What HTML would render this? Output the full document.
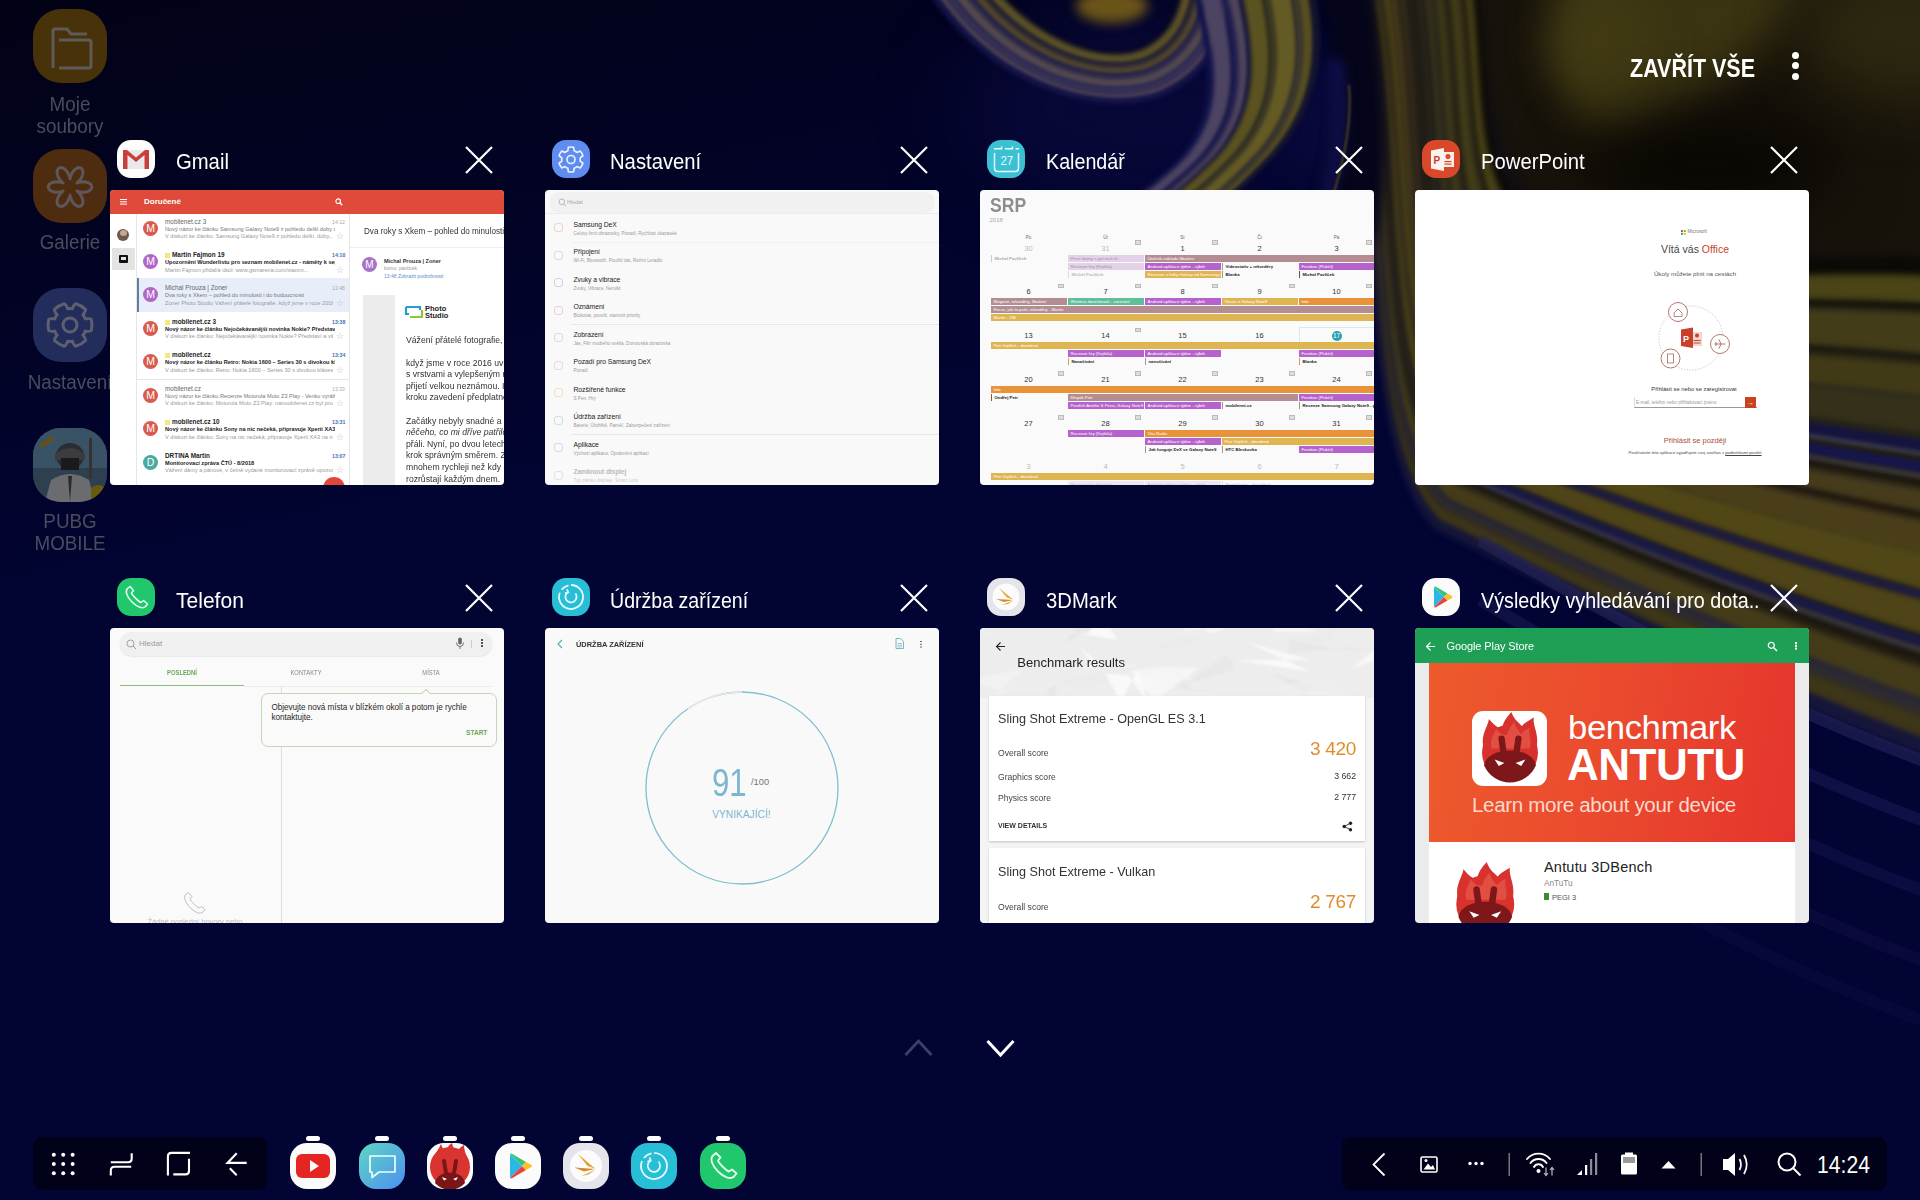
<!DOCTYPE html>
<html><head><meta charset="utf-8">
<style>
*{box-sizing:border-box}
html,body{margin:0;padding:0}
body{width:1920px;height:1200px;overflow:hidden;position:relative;background:#03043a;font-family:"Liberation Sans",sans-serif}
.abs{position:absolute}
#wall{position:absolute;left:0;top:0;width:1920px;height:1200px}
.dtxt{position:absolute;color:#4b4c5c;font-size:20px;line-height:22px;text-align:center;width:110px;left:15px;transform:scaleX(.94)}
.dicon{position:absolute;left:33px;width:74px;height:74px;border-radius:28px}
.card{position:absolute;width:394px;height:295px;border-radius:4px;overflow:hidden;background:#fafafa}
.ttl{position:absolute;color:#fff;font-size:22.5px;line-height:26px;white-space:nowrap;transform-origin:0 50%;transform:scaleX(.9)}
.aic{position:absolute;width:38px;height:38px;border-radius:14px;overflow:hidden}
.x{position:absolute;width:28px;height:28px}
.c{position:absolute;white-space:nowrap}
</style></head>
<body>
<svg id="wall" viewBox="0 0 1920 1200">
<defs>
<linearGradient id="gbase" x1="0" y1="0" x2=".35" y2="1"><stop offset="0" stop-color="#020216"/><stop offset=".45" stop-color="#020432"/><stop offset="1" stop-color="#020434"/></linearGradient>
<filter id="b1" filterUnits="userSpaceOnUse" x="-300" y="-300" width="2520" height="1800" color-interpolation-filters="sRGB"><feGaussianBlur stdDeviation="1"/></filter>
<filter id="b2" filterUnits="userSpaceOnUse" x="-300" y="-300" width="2520" height="1800" color-interpolation-filters="sRGB"><feGaussianBlur stdDeviation="2"/></filter>
<filter id="b3" filterUnits="userSpaceOnUse" x="-300" y="-300" width="2520" height="1800" color-interpolation-filters="sRGB"><feGaussianBlur stdDeviation="3"/></filter>
<filter id="b6" filterUnits="userSpaceOnUse" x="-300" y="-300" width="2520" height="1800" color-interpolation-filters="sRGB"><feGaussianBlur stdDeviation="6"/></filter>
<filter id="b20" filterUnits="userSpaceOnUse" x="-300" y="-300" width="2520" height="1800" color-interpolation-filters="sRGB"><feGaussianBlur stdDeviation="20"/></filter>
<filter id="b30" filterUnits="userSpaceOnUse" x="-300" y="-300" width="2520" height="1800" color-interpolation-filters="sRGB"><feGaussianBlur stdDeviation="30"/></filter>
<filter id="b40" filterUnits="userSpaceOnUse" x="-300" y="-300" width="2520" height="1800" color-interpolation-filters="sRGB"><feGaussianBlur stdDeviation="40"/></filter>
<filter id="b60" filterUnits="userSpaceOnUse" x="-300" y="-300" width="2520" height="1800" color-interpolation-filters="sRGB"><feGaussianBlur stdDeviation="60"/></filter>
</defs>
<rect width="1920" height="1200" fill="url(#gbase)"/>
<path d="M1450 -40 L1980 -40 L1980 300 C1800 270 1640 270 1540 230 C1480 200 1470 100 1450 -40Z" fill="#18130a" filter="url(#b20)"/>
<path d="M1562 -40 L1810 -40 C1790 40 1710 95 1650 130 C1605 152 1572 120 1562 60 Z" fill="#3a3412" filter="url(#b20)"/>
<ellipse cx="1600" cy="40" rx="50" ry="60" fill="#403a14" fill-opacity="1" filter="url(#b20)"/>
<ellipse cx="1910" cy="30" rx="110" ry="70" fill="#2c2810" fill-opacity="1" filter="url(#b30)"/>
<ellipse cx="1710" cy="165" rx="130" ry="55" fill="#0b0804" fill-opacity="1" filter="url(#b30)"/>
<ellipse cx="1150" cy="110" rx="190" ry="90" fill="#0a0a40" fill-opacity="0.7" filter="url(#b40)"/>
<ellipse cx="1330" cy="120" rx="40" ry="70" fill="#0a0a40" fill-opacity="0.8" filter="url(#b20)"/>
<path d="M1475.6 -30.0 C1492.5 99.6 1470.6 199.0 1570.6 238.8 C1680.3 280.7 1830.2 246.2 1980.0 260.1 L1980.0 282.9 C1827.4 267.5 1676.5 295.9 1563.8 253.2 C1463.8 211.4 1486.5 104.4 1468.4 -30.0 Z" fill="#0c0a06" fill-opacity="1" filter="url(#b3)"/>
<path d="M1469.6 -30.0 C1487.5 103.6 1465.0 209.4 1565.0 250.8 C1677.1 293.4 1827.8 264.0 1980.0 279.1 L1980.0 311.5 C1823.8 294.2 1671.7 314.9 1555.4 271.2 C1455.4 227.0 1479.1 110.4 1459.4 -30.0 Z" fill="#4a4416" fill-opacity="1" filter="url(#b3)"/>
<path d="M1460.6 -30.0 C1480.1 109.6 1456.6 225.0 1556.6 268.8 C1672.3 312.3 1824.2 290.6 1980.0 307.7 L1980.0 321.0 C1822.6 303.1 1670.1 321.2 1552.6 277.2 C1452.6 232.2 1476.6 112.4 1456.4 -30.0 Z" fill="#16140a" fill-opacity="1" filter="url(#b3)"/>
<path d="M1457.6 -30.0 C1477.6 111.6 1453.8 230.2 1553.8 274.8 C1670.7 318.7 1823.0 299.5 1980.0 317.2 L1980.0 363.9 C1817.2 343.0 1662.9 349.6 1540.0 304.2 C1440.0 255.6 1465.5 121.4 1442.9 -30.0 Z" fill="#423c18" fill-opacity="1" filter="url(#b3)"/>
<path d="M1444.1 -30.0 C1466.5 120.6 1441.2 253.6 1541.2 301.8 C1663.5 347.1 1817.6 339.5 1980.0 360.1 L1980.0 373.4 C1816.0 351.9 1661.3 355.9 1537.2 310.2 C1437.2 260.8 1463.0 123.4 1439.9 -30.0 Z" fill="#1e1a0e" fill-opacity="1" filter="url(#b3)"/>
<path d="M1441.1 -30.0 C1464.0 122.6 1438.4 258.8 1538.4 307.8 C1661.9 353.4 1816.4 348.3 1980.0 369.6 L1980.0 406.7 C1811.8 383.0 1655.7 378.1 1527.4 331.2 C1427.4 279.0 1454.3 130.4 1429.4 -30.0 Z" fill="#403a16" fill-opacity="1" filter="url(#b3)"/>
<path d="M1430.6 -30.0 C1455.3 129.6 1428.6 277.0 1528.6 328.8 C1656.3 375.5 1812.2 379.4 1980.0 402.9 L1980.0 444.8 C1807.0 418.5 1649.3 403.3 1516.2 355.2 C1416.2 299.8 1444.4 138.4 1417.4 -30.0 Z" fill="#34301a" fill-opacity="1" filter="url(#b3)"/>
<path d="M1418.6 -30.0 C1445.4 137.6 1417.4 297.8 1517.4 352.8 C1649.9 400.8 1807.4 414.9 1980.0 441.0 L1980.0 461.4 C1804.9 434.0 1646.5 414.4 1511.3 365.7 C1411.3 308.9 1440.0 141.9 1412.2 -30.0 Z" fill="#2a2616" fill-opacity="1" filter="url(#b3)"/>
<path d="M1413.3 -30.0 C1441.0 141.1 1412.5 306.9 1512.5 363.3 C1647.1 411.9 1805.3 430.5 1980.0 457.6 L1980.0 468.6 C1804.0 440.7 1645.3 419.1 1509.2 370.2 C1409.2 312.8 1438.2 143.4 1409.9 -30.0 Z" fill="#3e3a1c" fill-opacity="1" filter="url(#b3)"/>
<path d="M1411.1 -30.0 C1439.2 142.6 1410.4 310.8 1510.4 367.8 C1645.9 416.6 1804.4 437.1 1980.0 464.8 L1980.0 485.2 C1801.9 456.2 1642.5 430.2 1504.3 380.7 C1404.3 321.9 1433.8 146.9 1404.7 -30.0 Z" fill="#221e12" fill-opacity="1" filter="url(#b3)"/>
<path d="M1405.8 -30.0 C1434.8 146.1 1405.5 319.9 1505.5 378.3 C1643.1 427.7 1802.3 452.7 1980.0 481.4 L1980.0 492.4 C1801.0 462.9 1641.3 434.9 1502.2 385.2 C1402.2 325.8 1432.0 148.4 1402.4 -30.0 Z" fill="#3a3418" fill-opacity="1" filter="url(#b3)"/>
<path d="M1403.6 -30.0 C1433.0 147.6 1403.4 323.8 1503.4 382.8 C1641.9 432.4 1801.4 459.3 1980.0 488.6 L1980.0 502.2 C1799.7 471.8 1639.4 441.2 1499.5 391.1 C1399.6 330.9 1429.7 150.4 1399.5 -30.0 Z" fill="#1c180e" fill-opacity="1" filter="url(#b3)"/>
<path d="M1400.6 -30.0 C1430.5 149.6 1400.6 329.0 1500.6 388.8 C1640.3 438.7 1800.2 468.2 1980.0 498.1 L1980.0 527.0 C1796.1 492.1 1632.2 454.7 1493.6 403.5 C1395.6 340.8 1425.9 154.9 1394.1 -30.0 Z" fill="#463c1c" fill-opacity="1" filter="url(#b3)"/>
<path d="M1395.1 -30.0 C1426.6 154.1 1396.3 339.0 1494.7 401.3 C1633.4 452.3 1796.7 488.5 1980.0 522.6 L1980.0 535.2 C1794.9 498.8 1629.8 459.2 1491.7 407.7 C1394.2 344.1 1424.6 156.4 1392.3 -30.0 Z" fill="#1e160c" fill-opacity="1" filter="url(#b3)"/>
<path d="M1393.3 -30.0 C1425.3 155.6 1395.0 342.3 1492.7 405.5 C1631.0 456.8 1795.5 495.2 1980.0 530.8 L1980.0 568.2 C1790.1 525.8 1620.2 477.2 1483.9 424.2 C1388.8 357.3 1419.6 162.4 1385.1 -30.0 Z" fill="#4a3e1a" fill-opacity="1" filter="url(#b3)"/>
<path d="M1386.1 -30.0 C1420.3 161.6 1389.6 355.5 1484.9 422.0 C1621.4 474.8 1790.7 522.2 1980.0 563.8 L1980.0 609.4 C1784.1 559.5 1608.2 499.7 1474.1 444.9 C1382.1 373.8 1413.3 169.9 1376.1 -30.0 Z" fill="#514616" fill-opacity="1" filter="url(#b3)"/>
<path d="M1377.1 -30.0 C1414.0 169.1 1382.8 372.0 1475.2 442.7 C1609.4 497.3 1784.7 555.9 1980.0 605.0 L1980.0 617.7 C1782.9 566.3 1605.8 504.2 1472.2 449.1 C1380.7 377.1 1412.0 171.4 1374.3 -30.0 Z" fill="#2a2414" fill-opacity="1" filter="url(#b3)"/>
<path d="M1375.3 -30.0 C1412.7 170.6 1381.5 375.3 1473.2 446.9 C1607.0 501.8 1783.5 562.7 1980.0 613.3 L1980.0 656.2 C1777.3 597.8 1594.6 525.2 1463.1 468.4 C1374.4 392.5 1406.1 178.4 1365.9 -30.0 Z" fill="#4e4418" fill-opacity="1" filter="url(#b3)"/>
<path d="M1366.9 -30.0 C1406.8 177.6 1375.2 390.7 1464.1 466.2 C1595.8 522.8 1777.9 594.2 1980.0 651.8 L1980.0 667.2 C1775.7 606.8 1591.4 531.2 1460.5 473.9 C1372.6 396.9 1404.5 180.4 1363.5 -30.0 Z" fill="#201c10" fill-opacity="1" filter="url(#b3)"/>
<path d="M1364.5 -30.0 C1405.1 179.6 1373.4 395.1 1461.5 471.7 C1592.6 528.8 1776.3 603.2 1980.0 662.8 L1980.0 675.4 C1774.5 613.5 1589.0 535.7 1458.5 478.0 C1371.3 400.2 1403.2 181.9 1361.7 -30.0 Z" fill="#3a3420" fill-opacity="1" filter="url(#b3)"/>
<path d="M1362.7 -30.0 C1403.9 181.1 1372.0 398.4 1459.6 475.8 C1590.2 533.3 1775.1 610.0 1980.0 671.0 L1980.0 689.2 C1772.5 624.8 1585.0 543.2 1455.3 484.9 C1369.0 405.7 1401.1 184.4 1358.7 -30.0 Z" fill="#1e1a10" fill-opacity="1" filter="url(#b3)"/>
<path d="M1359.7 -30.0 C1401.8 183.6 1369.8 403.9 1456.3 482.7 C1586.2 540.8 1773.1 621.2 1980.0 684.8 L1980.0 722.2 C1767.7 651.8 1575.4 561.2 1447.5 501.5 C1363.6 418.9 1396.1 190.4 1351.5 -30.0 Z" fill="#443c18" fill-opacity="1" filter="url(#b3)"/>
<path d="M1352.5 -30.0 C1396.7 189.6 1364.4 417.1 1448.5 499.3 C1576.6 558.8 1768.3 648.2 1980.0 717.8 L1980.0 738.7 C1765.3 665.3 1570.6 570.2 1443.6 509.8 C1360.9 425.5 1393.5 193.4 1347.9 -30.0 Z" fill="#2c2a34" fill-opacity="1" filter="url(#b3)"/>
<path d="M1348.9 -30.0 C1394.2 192.6 1361.7 423.7 1444.6 507.6 C1571.8 567.8 1765.9 661.7 1980.0 734.3 L1980.0 763.5 C1761.7 685.5 1563.4 583.7 1437.7 522.2 C1356.9 435.4 1389.8 197.9 1342.5 -30.0 Z" fill="#3e3618" fill-opacity="1" filter="url(#b3)"/>
<path d="M1343.5 -30.0 C1390.4 197.1 1357.6 433.6 1438.8 520.0 C1564.6 581.3 1762.3 682.0 1980.0 759.0 L1980.0 777.2 C1759.7 696.8 1559.4 591.2 1434.5 529.1 C1354.6 440.9 1387.7 200.4 1339.5 -30.0 Z" fill="#16163c" fill-opacity="1" filter="url(#b3)"/>
<path d="M1513.3 361.5 C1647.6 410.0 1805.7 427.8 1980.0 454.8" fill="none" stroke="#14143e" stroke-width="14" filter="url(#b2)"/>
<path d="M1507.0 375.0 C1644.0 424.2 1803.0 447.8 1980.0 476.2" fill="none" stroke="#16164a" stroke-width="12" filter="url(#b2)"/>
<path d="M1511.2 366.0 C1646.4 414.7 1804.8 434.5 1980.0 461.9" fill="none" stroke="#44445e" stroke-width="2.5" filter="url(#b2)"/>
<path d="M1504.2 381.0 C1642.4 430.5 1801.8 456.7 1980.0 485.7" fill="none" stroke="#3e3e58" stroke-width="2.5" filter="url(#b2)"/>
<path d="M1474.0 445.2 C1608.0 500.0 1784.0 560.0 1980.0 610.0" fill="none" stroke="#1e1c40" stroke-width="8" filter="url(#b2)"/>
<path d="M1462.3 470.0 C1593.6 527.0 1776.8 600.5 1980.0 659.5" fill="none" stroke="#1a1a44" stroke-width="10" filter="url(#b2)"/>
<path d="M1460.3 474.2 C1591.2 531.5 1775.6 607.2 1980.0 667.8" fill="none" stroke="#3c3c56" stroke-width="2.5" filter="url(#b2)"/>
<path d="M1480 540 C1650 640 1820 730 1980 780" fill="none" stroke="#24245a" stroke-opacity="0.6" stroke-width="12" filter="url(#b8)"/>
<path d="M1480 600 C1650 700 1820 790 1980 840" fill="none" stroke="#1c1c56" stroke-opacity="0.5" stroke-width="12" filter="url(#b8)"/>
<path d="M1480 670 C1650 770 1820 860 1980 910" fill="none" stroke="#18184f" stroke-opacity="0.4" stroke-width="12" filter="url(#b8)"/>
<path d="M1480 740 C1650 840 1820 930 1980 980" fill="none" stroke="#16164a" stroke-opacity="0.35" stroke-width="12" filter="url(#b8)"/>
<path d="M1480 800 C1650 900 1820 990 1980 1040" fill="none" stroke="#14144a" stroke-opacity="0.3" stroke-width="12" filter="url(#b8)"/>
<path d="M1312 -30 C1345 60 1345 150 1300 240 L1375 240 C1395 150 1380 60 1370 -30Z" fill="#04041a" filter="url(#b6)"/>
<path d="M1335 60 C1345 110 1340 160 1322 210" fill="none" stroke="#10104e" stroke-width="14" filter="url(#b6)"/>
<path d="M1349 85 C1353 130 1340 175 1330 205" fill="none" stroke="#5a5018" stroke-width="1.6" filter="url(#b1)"/>
<ellipse cx="1112" cy="6" rx="36" ry="17" fill="#6a5418" fill-opacity="1" filter="url(#b6)"/>
<path d="M985.3 -30.0 C1030.2 34.8 1100.0 61.8 1139.9 46.8 C1167.8 33.8 1179.8 9.9 1179.8 -30.0 L1184.4 -30.0 C1184.1 11.5 1171.1 37.2 1141.5 50.7 C1099.3 66.3 1025.9 38.5 979.8 -30.0 Z" fill="#0a0a22" fill-opacity="1" filter="url(#b2)"/>
<path d="M980.4 -30.0 C1026.4 38.1 1099.3 65.8 1141.3 50.3 C1170.8 36.8 1183.6 11.3 1184.0 -30.0 L1194.6 -30.0 C1193.4 14.9 1178.2 44.5 1144.9 59.2 C1097.6 76.2 1016.6 46.5 967.9 -30.0 Z" fill="#5a5026" fill-opacity="1" filter="url(#b2)"/>
<path d="M968.5 -30.0 C1017.0 46.1 1097.6 75.7 1144.7 58.8 C1177.9 44.1 1193.0 14.7 1194.2 -30.0 L1198.2 -30.0 C1196.7 16.1 1180.8 47.1 1146.1 62.2 C1097.0 79.6 1013.3 49.3 963.7 -30.0 Z" fill="#24203a" fill-opacity="1" filter="url(#b2)"/>
<path d="M964.3 -30.0 C1013.7 48.9 1097.0 79.2 1145.9 61.8 C1180.4 46.7 1196.3 15.9 1197.8 -30.0 L1207.2 -30.0 C1205.0 19.1 1187.1 53.5 1149.1 69.7 C1095.5 88.3 1005.0 56.3 953.2 -30.0 Z" fill="#50462e" fill-opacity="1" filter="url(#b2)"/>
<path d="M953.8 -30.0 C1005.5 56.0 1095.5 87.9 1148.9 69.3 C1186.7 53.2 1204.5 18.9 1206.8 -30.0 L1211.4 -30.0 C1208.8 20.5 1190.0 56.5 1150.5 73.2 C1094.8 92.4 1001.2 59.6 948.3 -30.0 Z" fill="#2a2658" fill-opacity="1" filter="url(#b2)"/>
<path d="M948.9 -30.0 C1001.6 59.3 1094.8 91.9 1150.3 72.8 C1189.7 56.2 1208.4 20.3 1211.0 -30.0 L1222.2 -30.0 C1218.7 24.1 1197.6 64.3 1154.1 82.2 C1093.0 102.8 991.3 68.1 935.7 -30.0 Z" fill="#524850" fill-opacity="1" filter="url(#b2)"/>
<path d="M936.3 -30.0 C991.7 67.7 1093.0 102.4 1153.9 81.8 C1197.2 63.9 1218.3 23.9 1221.8 -30.0 L1228.2 -30.0 C1224.2 26.1 1201.8 68.6 1156.1 87.2 C1092.0 108.6 985.8 72.8 928.7 -30.0 Z" fill="#3a3460" fill-opacity="1" filter="url(#b2)"/>
<path d="M929.3 -30.0 C986.2 72.4 1092.0 108.2 1155.9 86.8 C1201.4 68.2 1223.8 25.9 1227.8 -30.0 L1235.4 -30.0 C1230.8 28.5 1206.8 73.7 1158.5 93.2 C1090.8 115.6 979.2 78.4 920.3 -30.0 Z" fill="#4c4258" fill-opacity="1" filter="url(#b2)"/>
<path d="M920.9 -30.0 C979.6 78.1 1090.8 115.1 1158.3 92.8 C1206.5 73.4 1230.4 28.3 1235.0 -30.0 L1240.2 -30.0 C1235.2 30.1 1210.2 77.2 1160.1 97.2 C1090.0 120.2 974.8 82.2 914.7 -30.0 Z" fill="#14144a" fill-opacity="1" filter="url(#b2)"/>
<path d="M1187.5 -30.0 C1209.5 60.0 1221.6 110.0 1177.6 160.0 C1144.6 192.0 1109.6 215.0 1059.5 250.0 L1067.6 250.0 C1116.5 215.0 1151.6 191.6 1184.4 159.5 C1228.1 109.7 1217.7 59.4 1195.8 -30.0 Z" fill="#12124c" fill-opacity="1" filter="url(#b2)"/>
<path d="M1194.8 -30.0 C1216.7 59.4 1227.4 109.7 1183.6 159.6 C1150.8 191.6 1115.7 215.0 1066.6 250.0 L1086.4 250.0 C1132.8 215.0 1168.1 190.4 1200.4 158.2 C1243.5 108.9 1236.9 57.8 1215.3 -30.0 Z" fill="#4c4462" fill-opacity="1" filter="url(#b2)"/>
<path d="M1214.4 -30.0 C1235.9 57.8 1242.7 108.9 1199.6 158.3 C1167.2 190.5 1132.0 215.0 1085.5 250.0 L1093.5 250.0 C1139.0 215.0 1174.3 190.0 1206.4 157.7 C1249.3 108.6 1244.1 57.2 1222.6 -30.0 Z" fill="#1e1c50" fill-opacity="1" filter="url(#b2)"/>
<path d="M1221.7 -30.0 C1243.1 57.2 1248.5 108.6 1205.6 157.8 C1173.4 190.1 1138.2 215.0 1092.6 250.0 L1104.1 250.0 C1148.1 215.0 1183.5 189.4 1215.4 157.0 C1257.9 108.1 1254.9 56.3 1233.6 -30.0 Z" fill="#4e445c" fill-opacity="1" filter="url(#b2)"/>
<path d="M1232.7 -30.0 C1253.9 56.3 1257.1 108.2 1214.6 157.1 C1182.7 189.4 1147.3 215.0 1103.2 250.0 L1107.7 250.0 C1151.2 215.0 1186.6 189.2 1218.4 156.8 C1260.8 108.0 1258.5 56.0 1237.3 -30.0 Z" fill="#141440" fill-opacity="1" filter="url(#b2)"/>
<path d="M1236.3 -30.0 C1257.5 56.0 1260.0 108.0 1217.6 156.8 C1185.8 189.2 1150.4 215.0 1106.7 250.0 L1126.6 250.0 C1167.5 215.0 1203.1 188.1 1234.4 155.5 C1276.1 107.2 1277.7 54.4 1256.8 -30.0 Z" fill="#5a5220" fill-opacity="1" filter="url(#b2)"/>
<path d="M1255.8 -30.0 C1276.7 54.4 1275.4 107.2 1233.6 155.6 C1202.3 188.1 1166.7 215.0 1125.6 250.0 L1133.6 250.0 C1173.6 215.0 1209.3 187.6 1240.4 155.0 C1281.9 106.9 1284.9 53.8 1264.1 -30.0 Z" fill="#3a381e" fill-opacity="1" filter="url(#b2)"/>
<path d="M1263.2 -30.0 C1283.9 53.8 1281.1 106.9 1239.6 155.1 C1208.4 187.7 1172.8 215.0 1132.7 250.0 L1154.9 250.0 C1192.0 215.0 1227.8 186.4 1258.4 153.6 C1299.2 106.0 1306.5 52.0 1286.1 -30.0 Z" fill="#645a24" fill-opacity="1" filter="url(#b2)"/>
<path d="M1285.1 -30.0 C1305.5 52.0 1298.4 106.0 1257.6 153.6 C1227.0 186.4 1191.2 215.0 1153.9 250.0 L1160.8 250.0 C1197.1 215.0 1233.0 186.0 1263.4 153.2 C1304.0 105.7 1312.5 51.5 1292.2 -30.0 Z" fill="#3e3a30" fill-opacity="1" filter="url(#b2)"/>
<path d="M1291.2 -30.0 C1311.5 51.5 1303.2 105.8 1262.6 153.2 C1232.1 186.1 1196.3 215.0 1159.8 250.0 L1172.6 250.0 C1207.3 215.0 1243.3 185.3 1273.4 152.4 C1313.6 105.2 1324.5 50.5 1304.4 -30.0 Z" fill="#564e22" fill-opacity="1" filter="url(#b2)"/>
<path d="M1303.4 -30.0 C1323.5 50.5 1312.8 105.3 1272.6 152.4 C1242.4 185.4 1206.5 215.0 1171.6 250.0 L1178.5 250.0 C1212.4 215.0 1248.4 185.0 1278.4 152.0 C1318.4 105.0 1330.5 50.0 1310.5 -30.0 Z" fill="#141430" fill-opacity="1" filter="url(#b2)"/>
</svg>

<!-- desktop icons -->
<div class="dicon" style="top:9px;background:#48320a"><svg width="74" height="74" viewBox="0 0 74 74"><path d="M20 59 L20 22 Q20 20 22 20 L34 20 L38 25 L54 25" fill="none" stroke="#5e5a58" stroke-width="3"/><path d="M26 31 L56 31 Q58 31 58 33 L58 57 Q58 59 56 59 L26 59" fill="none" stroke="#5e5a58" stroke-width="3"/></svg></div>
<div class="dtxt" style="top:93px">Moje<br>soubory</div>
<div class="dicon" style="top:149px;background:#4e2c10"><svg width="74" height="74" viewBox="0 0 74 74"><path d="M59.0 38.0 L57.8 40.7 L54.8 42.6 L51.3 43.2 L48.1 43.1 L45.9 42.6 L44.6 42.2 L44.0 42.0 L44.0 42.1 L44.5 42.5 L45.5 43.4 L47.0 45.1 L48.7 47.7 L49.9 51.2 L49.8 54.7 L48.0 57.1 L45.0 57.4 L42.0 55.7 L39.6 53.0 L38.2 50.2 L37.4 48.1 L37.1 46.7 L37.0 46.1 L37.0 46.1 L36.9 46.7 L36.6 48.1 L35.8 50.2 L34.4 53.0 L32.0 55.7 L29.0 57.4 L26.0 57.1 L24.2 54.7 L24.1 51.2 L25.3 47.7 L27.0 45.1 L28.5 43.4 L29.5 42.5 L30.0 42.1 L30.0 42.0 L29.4 42.2 L28.1 42.6 L25.9 43.1 L22.7 43.2 L19.2 42.6 L16.2 40.7 L15.0 38.0 L16.2 35.3 L19.2 33.4 L22.7 32.8 L25.9 32.9 L28.1 33.4 L29.4 33.8 L30.0 34.0 L30.0 33.9 L29.5 33.5 L28.5 32.6 L27.0 30.9 L25.3 28.3 L24.1 24.8 L24.2 21.3 L26.0 18.9 L29.0 18.6 L32.0 20.3 L34.4 23.0 L35.8 25.8 L36.6 27.9 L36.9 29.3 L37.0 29.9 L37.0 29.9 L37.1 29.3 L37.4 27.9 L38.2 25.8 L39.6 23.0 L42.0 20.3 L45.0 18.6 L48.0 18.9 L49.8 21.3 L49.9 24.8 L48.7 28.3 L47.0 30.9 L45.5 32.6 L44.5 33.5 L44.0 33.9 L44.0 34.0 L44.6 33.8 L45.9 33.4 L48.1 32.9 L51.3 32.8 L54.8 33.4 L57.8 35.3 L59.0 38.0Z" fill="none" stroke="#5e5658" stroke-width="3" stroke-linejoin="round"/></svg></div>
<div class="dtxt" style="top:230.5px">Galerie</div>
<div class="dicon" style="top:288px;background:#232d5c"><svg width="74" height="74" viewBox="0 0 74 74"><path d="M52.31 30.85 Q57.52 30.39 58.25 31.31 A22 22 0 0 1 58.25 42.69 Q57.52 43.61 52.31 43.15 A16.5 16.5 0 0 1 49.98 47.19 L49.98 47.19 Q52.99 51.46 52.56 52.56 A22 22 0 0 1 42.69 58.25 Q41.53 58.08 39.33 53.33 A16.5 16.5 0 0 1 34.67 53.33 L34.67 53.33 Q32.47 58.08 31.31 58.25 A22 22 0 0 1 21.44 52.56 Q21.01 51.46 24.02 47.19 A16.5 16.5 0 0 1 21.69 43.15 L21.69 43.15 Q16.48 43.61 15.75 42.69 A22 22 0 0 1 15.75 31.31 Q16.48 30.39 21.69 30.85 A16.5 16.5 0 0 1 24.02 26.81 L24.02 26.81 Q21.01 22.54 21.44 21.44 A22 22 0 0 1 31.31 15.75 Q32.47 15.92 34.67 20.67 A16.5 16.5 0 0 1 39.33 20.67 L39.33 20.67 Q41.53 15.92 42.69 15.75 A22 22 0 0 1 52.56 21.44 Q52.99 22.54 49.98 26.81 A16.5 16.5 0 0 1 52.31 30.85 Z" fill="none" stroke="#5e6070" stroke-width="3"/><circle cx="37" cy="37" r="7" fill="none" stroke="#5e6070" stroke-width="3"/></svg></div>
<div class="dtxt" style="top:370.5px">Nastavení</div>
<div class="dicon" style="top:428px;background:#3e4a58;overflow:hidden"><svg width="74" height="74" viewBox="0 0 74 74"><rect width="74" height="74" fill="#2e4050"/><rect y="0" width="74" height="40" fill="#3a5266"/><path d="M12 74 L18 52 Q37 40 56 52 L62 74Z" fill="#6a6c70"/><path d="M35 48 L37 74 L39 48Z" fill="#2a2a2a"/><ellipse cx="37" cy="28" rx="14" ry="13" fill="#2a2c30"/><path d="M22 26 Q37 14 52 26 L52 32 L22 32Z" fill="#3a3c40"/><rect x="28" y="30" width="18" height="12" fill="#1a1a1e"/><path d="M8 18 L20 10" stroke="#6a5010" stroke-width="4"/><path d="M58 60 Q66 54 72 60 L70 70 L58 70Z" fill="#6a5a10"/><rect x="56" y="10" width="3" height="40" fill="#3a3030"/></svg></div>
<div class="dtxt" style="top:510px">PUBG<br>MOBILE</div>

<!-- header -->
<div class="c" style="left:1630px;top:52.5px;color:#fff;font-weight:bold;font-size:25px;line-height:30px;transform-origin:0 50%;transform:scaleX(.86)">ZAVŘÍT VŠE</div>
<div class="abs" style="left:1792px;top:52px;width:7px;height:7px;border-radius:50%;background:#fff"></div>
<div class="abs" style="left:1792px;top:62px;width:7px;height:7px;border-radius:50%;background:#fff"></div>
<div class="abs" style="left:1792px;top:73px;width:7px;height:7px;border-radius:50%;background:#fff"></div>

<!-- CARDS -->

<!-- card frame: Gmail -->
<div class="aic" style="left:117px;top:140px;background:#fdfdfd">
<svg width="38" height="38" viewBox="0 0 38 38"><rect x="8" y="10" width="22" height="19" fill="#e9e9e9"/><path d="M6 10 L6 29 L10.5 29 L10.5 15 L19 22 L27.5 15 L27.5 29 L32 29 L32 10 L28 10 L19 17.5 L10 10Z" fill="#c9403a"/></svg></div>
<div class="ttl" style="left:176px;top:149px">Gmail</div>
<svg class="x" style="left:465px;top:146px" viewBox="0 0 28 28"><path d="M1 1L27 27M27 1L1 27" stroke="#fff" stroke-width="2.2"/></svg>

<div class="card" id="gmail" style="left:110px;top:190px;background:#fff">
 <div class="abs" style="left:0;top:0;width:394px;height:24px;background:#e04a3b"></div>
 <div class="abs" style="left:10px;top:9px;width:7px;height:1.2px;background:#fff;box-shadow:0 2.3px 0 #fff,0 4.6px 0 #fff"></div>
 <div class="c" style="left:34px;top:7px;font-size:8px;color:#fff;font-weight:bold">Doručené</div>
 <svg class="abs" style="left:225px;top:8px" width="8" height="8" viewBox="0 0 8 8"><circle cx="3.2" cy="3.2" r="2.3" fill="none" stroke="#fff" stroke-width="1.2"/><path d="M5 5L7.3 7.3" stroke="#fff" stroke-width="1.3"/></svg>
 <div class="abs" style="left:26px;top:24px;width:1px;height:271px;background:#e6e6e6"></div>
 <div class="abs" style="left:7px;top:39px;width:12px;height:12px;border-radius:50%;background:#6a5a50"></div>
 <div class="abs" style="left:9.5px;top:40px;width:7px;height:6px;border-radius:50%;background:#c9a58c"></div>
 <div class="abs" style="left:2px;top:58px;width:23px;height:22px;background:#e3e3e3"></div>
 <div class="abs" style="left:9px;top:65px;width:9px;height:8px;background:#111;border-radius:1px"></div>
 <div class="abs" style="left:11px;top:67px;width:5px;height:3px;background:#e3e3e3"></div>
 <div class="abs" style="left:239px;top:24px;width:1px;height:271px;background:#e6e6e6"></div>
 <div class="abs" style="left:33px;top:30.5px;width:15px;height:15px;border-radius:50%;background:#d95b4d;color:#fff;font-size:10.5px;line-height:15px;text-align:center">M</div>
 <div class="c" style="left:55px;top:27.5px;font-size:6.4px;color:#666;">mobilenet.cz  3</div>
 <div class="c" style="left:55px;top:35.5px;width:170px;overflow:hidden;font-size:5.6px;color:#777;">Nový názor ke článku Samsung Galaxy Note9 z pohledu delší doby z...</div>
 <div class="c" style="left:55px;top:43.0px;width:168px;overflow:hidden;font-size:5.6px;color:#999">V diskuzi ke článku: Samsung Galaxy Note9 z pohledu delší, doby...</div>
 <div class="c" style="left:222px;top:28.5px;font-size:5.2px;color:#aaa;">14:12</div>
 <div class="c" style="left:226px;top:41.0px;font-size:9px;color:#bbb">☆</div>
 <div class="abs" style="left:33px;top:64.0px;width:15px;height:15px;border-radius:50%;background:#b266c8;color:#fff;font-size:10.5px;line-height:15px;text-align:center">M</div>
 <div class="abs" style="left:55px;top:63.0px;width:5px;height:5px;background:#f5e97a"></div>
 <div class="c" style="left:62px;top:61.0px;font-size:6.4px;color:#222;font-weight:bold">Martin Fajmon  19</div>
 <div class="c" style="left:55px;top:69.0px;width:170px;overflow:hidden;font-size:5.6px;color:#222;font-weight:bold">Upozornění Wunderlistu pro seznam mobilenet.cz - náměty k sepsá...</div>
 <div class="c" style="left:55px;top:76.5px;width:168px;overflow:hidden;font-size:5.6px;color:#999">Martin Fajmon přidal/a úkol: www.gsmarena.com/xiaomi...</div>
 <div class="c" style="left:222px;top:62.0px;font-size:5.2px;color:#3d6fb0;font-weight:bold">14:10</div>
 <div class="c" style="left:226px;top:74.5px;font-size:9px;color:#bbb">☆</div>
 <div class="abs" style="left:27px;top:88.2px;width:212px;height:33.4px;background:#e8eef9;border-left:2px solid #5d7fa6"></div>
 <div class="abs" style="left:33px;top:97.4px;width:15px;height:15px;border-radius:50%;background:#b266c8;color:#fff;font-size:10.5px;line-height:15px;text-align:center">M</div>
 <div class="c" style="left:55px;top:94.4px;font-size:6.4px;color:#666;">Michal Prouza | Zoner</div>
 <div class="c" style="left:55px;top:102.4px;width:170px;overflow:hidden;font-size:5.6px;color:#777;">Dva roky s Xkem – pohled do minulosti i do budoucnosti</div>
 <div class="c" style="left:55px;top:109.9px;width:168px;overflow:hidden;font-size:5.6px;color:#999">Zoner Photo Studio Vážení přátelé fotografie, když jsme v roce 2016 u...</div>
 <div class="c" style="left:222px;top:95.4px;font-size:5.2px;color:#aaa;">13:48</div>
 <div class="c" style="left:226px;top:107.9px;font-size:9px;color:#bbb">☆</div>
 <div class="abs" style="left:33px;top:130.9px;width:15px;height:15px;border-radius:50%;background:#d95b4d;color:#fff;font-size:10.5px;line-height:15px;text-align:center">M</div>
 <div class="abs" style="left:55px;top:129.9px;width:5px;height:5px;background:#f5e97a"></div>
 <div class="c" style="left:62px;top:127.9px;font-size:6.4px;color:#222;font-weight:bold">mobilenet.cz  3</div>
 <div class="c" style="left:55px;top:135.9px;width:170px;overflow:hidden;font-size:5.6px;color:#222;font-weight:bold">Nový názor ke článku Nejočekávanější novinka Nokie? Představí a...</div>
 <div class="c" style="left:55px;top:143.4px;width:168px;overflow:hidden;font-size:5.6px;color:#999">V diskuzi ke článku: Nejočekávanější novinka Nokie? Představí a vše...</div>
 <div class="c" style="left:222px;top:128.9px;font-size:5.2px;color:#3d6fb0;font-weight:bold">13:38</div>
 <div class="c" style="left:226px;top:141.4px;font-size:9px;color:#bbb">☆</div>
 <div class="abs" style="left:33px;top:164.3px;width:15px;height:15px;border-radius:50%;background:#d95b4d;color:#fff;font-size:10.5px;line-height:15px;text-align:center">M</div>
 <div class="abs" style="left:55px;top:163.3px;width:5px;height:5px;background:#f5e97a"></div>
 <div class="c" style="left:62px;top:161.3px;font-size:6.4px;color:#222;font-weight:bold">mobilenet.cz</div>
 <div class="c" style="left:55px;top:169.3px;width:170px;overflow:hidden;font-size:5.6px;color:#222;font-weight:bold">Nový názor ke článku Retro: Nokia 1600 – Series 30 s divokou kláv...</div>
 <div class="c" style="left:55px;top:176.8px;width:168px;overflow:hidden;font-size:5.6px;color:#999">V diskuzi ke článku: Retro: Nokia 1600 – Series 30 s divokou klávesnicí...</div>
 <div class="c" style="left:222px;top:162.3px;font-size:5.2px;color:#3d6fb0;font-weight:bold">13:34</div>
 <div class="c" style="left:226px;top:174.8px;font-size:9px;color:#bbb">☆</div>
 <div class="abs" style="left:27px;top:188.5px;width:212px;height:1px;background:#e6e6e6"></div>
 <div class="abs" style="left:33px;top:197.8px;width:15px;height:15px;border-radius:50%;background:#d95b4d;color:#fff;font-size:10.5px;line-height:15px;text-align:center">M</div>
 <div class="c" style="left:55px;top:194.8px;font-size:6.4px;color:#666;">mobilenet.cz</div>
 <div class="c" style="left:55px;top:202.8px;width:170px;overflow:hidden;font-size:5.6px;color:#777;">Nový názor ke článku Recenze Motorola Moto Z3 Play - Venku vyráž...</div>
 <div class="c" style="left:55px;top:210.2px;width:168px;overflow:hidden;font-size:5.6px;color:#999">V diskuzi ke článku: Motorola Moto Z3 Play: nanoobilenet.cz byl prodán...</div>
 <div class="c" style="left:222px;top:195.8px;font-size:5.2px;color:#aaa;">13:33</div>
 <div class="c" style="left:226px;top:208.2px;font-size:9px;color:#bbb">☆</div>
 <div class="abs" style="left:33px;top:231.2px;width:15px;height:15px;border-radius:50%;background:#d95b4d;color:#fff;font-size:10.5px;line-height:15px;text-align:center">M</div>
 <div class="abs" style="left:55px;top:230.2px;width:5px;height:5px;background:#f5e97a"></div>
 <div class="c" style="left:62px;top:228.2px;font-size:6.4px;color:#222;font-weight:bold">mobilenet.cz  10</div>
 <div class="c" style="left:55px;top:236.2px;width:170px;overflow:hidden;font-size:5.6px;color:#222;font-weight:bold">Nový názor ke článku Sony na nic nečeká, připravuje Xperii XA3</div>
 <div class="c" style="left:55px;top:243.7px;width:168px;overflow:hidden;font-size:5.6px;color:#999">V diskuzi ke článku: Sony na nic nečeká, připravuje Xperii XA3 na mobile...</div>
 <div class="c" style="left:222px;top:229.2px;font-size:5.2px;color:#3d6fb0;font-weight:bold">13:31</div>
 <div class="c" style="left:226px;top:241.7px;font-size:9px;color:#bbb">☆</div>
 <div class="abs" style="left:33px;top:264.7px;width:15px;height:15px;border-radius:50%;background:#4aaa9e;color:#fff;font-size:10.5px;line-height:15px;text-align:center">D</div>
 <div class="c" style="left:55px;top:261.7px;font-size:6.4px;color:#222;font-weight:bold">DRTINA Martin</div>
 <div class="c" style="left:55px;top:269.7px;width:170px;overflow:hidden;font-size:5.6px;color:#222;font-weight:bold">Monitorovací zpráva ČTÚ - 8/2018</div>
 <div class="c" style="left:55px;top:277.2px;width:168px;overflow:hidden;font-size:5.6px;color:#999">Vážení dámy a pánové, v četně vydané monitorovací zprávě upozorňuj...</div>
 <div class="c" style="left:222px;top:262.7px;font-size:5.2px;color:#3d6fb0;font-weight:bold">13:07</div>
 <div class="c" style="left:226px;top:275.2px;font-size:9px;color:#bbb">☆</div>
 <div class="c" style="left:254px;top:36px;font-size:9px;color:#333;transform-origin:0 0;transform:scaleX(.9)">Dva roky s Xkem – pohled do minulosti i</div>
 <div class="abs" style="left:240px;top:57px;width:154px;height:1px;background:#eee"></div>
 <div class="abs" style="left:252px;top:66.5px;width:15px;height:15px;border-radius:50%;background:#a872c8;color:#fff;font-size:10px;line-height:15px;text-align:center">M</div>
 <div class="c" style="left:274px;top:67.5px;font-size:5.5px;color:#333;font-weight:bold">Michal Prouza | Zoner</div>
 <div class="c" style="left:274px;top:75px;font-size:5px;color:#999">komu: pavlicek</div>
 <div class="c" style="left:274px;top:82.5px;font-size:5px;color:#5a8fc8">13:48 Zobrazit podrobnosti</div>
 <div class="abs" style="left:252.5px;top:105px;width:32.5px;height:190px;background:#ececec"></div>
 <svg class="abs" style="left:294px;top:112px" width="50" height="18" viewBox="0 0 50 18"><path d="M2 5 L2 12 L5 12 M2 5 L16 5 L16 8" fill="none" stroke="#2a9bd0" stroke-width="2.2"/><path d="M6 15 L18 15 L18 8" fill="none" stroke="#8cc63f" stroke-width="2.2"/><text x="21" y="9" font-size="7.5" font-weight="bold" fill="#222" font-family="Liberation Sans">Photo</text><text x="21" y="16" font-size="7.5" font-weight="bold" fill="#222" font-family="Liberation Sans">Studio</text></svg>
 <div class="c" style="left:295.5px;top:143.5px;font-size:9.6px;line-height:11.6px;color:#333;transform-origin:0 0;transform:scaleX(.9)">Vážení přátelé fotografie,<br><br>když jsme v roce 2016 uvedli<br>s vrstvami a vylepšeným re<br>přijetí velkou neznámou. I<br>kroku zavedení předplatné<br><br>Začátky nebyly snadné a v<br><i>něčeho, co mi dříve patřilo,</i><br>přáli. Nyní, po dvou letech,<br>krok správným směrem. Z<br>mnohem rychleji než kdy d<br>rozrůstají každým dnem.</div>
 <div class="abs" style="left:213px;top:287px;width:22px;height:22px;border-radius:50%;background:#e0463a"></div>
</div>


<!-- Nastaveni -->
<div class="aic" style="left:552px;top:140px;background:#5f8def"><svg width="38" height="38" viewBox="0 0 38 38"><path d="M15.90 10.73 L16.27 7.30 A12.5 12.5 0 0 1 21.73 7.30 L22.10 10.73 A9.3 9.3 0 0 1 25.04 12.43 L25.04 12.43 L28.20 11.04 A12.5 12.5 0 0 1 30.93 15.76 L28.14 17.80 A9.3 9.3 0 0 1 28.14 21.20 L28.14 21.20 L30.93 23.24 A12.5 12.5 0 0 1 28.20 27.96 L25.04 26.57 A9.3 9.3 0 0 1 22.10 28.27 L22.10 28.27 L21.73 31.70 A12.5 12.5 0 0 1 16.27 31.70 L15.90 28.27 A9.3 9.3 0 0 1 12.96 26.57 L12.96 26.57 L9.80 27.96 A12.5 12.5 0 0 1 7.07 23.24 L9.86 21.20 A9.3 9.3 0 0 1 9.86 17.80 L9.86 17.80 L7.07 15.76 A12.5 12.5 0 0 1 9.80 11.04 L12.96 12.43 A9.3 9.3 0 0 1 15.90 10.73 Z" fill="none" stroke="#eef3ff" stroke-width="1.6" stroke-linejoin="round"/><circle cx="19" cy="19.5" r="4" fill="none" stroke="#eef3ff" stroke-width="1.6"/></svg></div>
<div class="ttl" style="left:609.5px;top:149px">Nastavení</div>
<svg class="x" style="left:900px;top:146px" viewBox="0 0 28 28"><path d="M1 1L27 27M27 1L1 27" stroke="#fff" stroke-width="2.2"/></svg>
<div class="card" id="nast" style="left:545px;top:190px;background:#f9f9f9">
 <div class="abs" style="left:4px;top:2px;width:386px;height:21px;border-radius:10px;background:#f1f1f1"></div>
 <svg class="abs" style="left:13px;top:8px" width="9" height="9" viewBox="0 0 9 9"><circle cx="3.8" cy="3.8" r="2.8" fill="none" stroke="#aaa" stroke-width=".8"/><path d="M5.8 5.8L8 8" stroke="#aaa" stroke-width=".9"/></svg>
 <div class="c" style="left:22px;top:8.5px;font-size:5.5px;color:#aaa">Hledat</div>
 <div class="abs" style="left:0;top:23px;width:394px;height:1px;background:#ececec"></div>
 <div class="abs" style="left:9px;top:33.0px;width:9px;height:9px;border:1px solid #e6a27a;border-radius:3px;opacity:.45"></div>
 <div class="c" style="left:28.5px;top:30.5px;font-size:6.8px;letter-spacing:-.05px;color:#1a1a1a">Samsung DeX</div>
 <div class="c" style="left:28.5px;top:40.5px;font-size:4.6px;color:#999">Celovy limit obrazovky, Pozadí, Rychlost ukazatele</div>
 <div class="abs" style="left:27px;top:51.5px;width:367px;height:1px;background:#f0f0f0"></div>
 <div class="abs" style="left:9px;top:60.5px;width:9px;height:9px;border:1px solid #8fc2e6;border-radius:3px;opacity:.45"></div>
 <div class="c" style="left:28.5px;top:58.0px;font-size:6.8px;letter-spacing:-.05px;color:#1a1a1a">Připojení</div>
 <div class="c" style="left:28.5px;top:68.0px;font-size:4.6px;color:#999">Wi-Fi, Bluetooth, Použití dat, Režim Letadlo</div>
 <div class="abs" style="left:9px;top:88.0px;width:9px;height:9px;border:1px solid #9aa8c8;border-radius:3px;opacity:.45"></div>
 <div class="c" style="left:28.5px;top:85.5px;font-size:6.8px;letter-spacing:-.05px;color:#1a1a1a">Zvuky a vibrace</div>
 <div class="c" style="left:28.5px;top:95.5px;font-size:4.6px;color:#999">Zvuky, Vibrace, Nerušit</div>
 <div class="abs" style="left:9px;top:115.5px;width:9px;height:9px;border:1px solid #e89a9a;border-radius:3px;opacity:.45"></div>
 <div class="c" style="left:28.5px;top:113.0px;font-size:6.8px;letter-spacing:-.05px;color:#1a1a1a">Oznámení</div>
 <div class="c" style="left:28.5px;top:123.0px;font-size:4.6px;color:#999">Blokovat, povolit, stanovit priority</div>
 <div class="abs" style="left:26px;top:134.0px;width:368px;height:1px;background:#e8e8e8"></div>
 <div class="abs" style="left:9px;top:143.0px;width:9px;height:9px;border:1px solid #a9c98a;border-radius:3px;opacity:.45"></div>
 <div class="c" style="left:28.5px;top:140.5px;font-size:6.8px;letter-spacing:-.05px;color:#1a1a1a">Zobrazení</div>
 <div class="c" style="left:28.5px;top:150.5px;font-size:4.6px;color:#999">Jas, Filtr modrého světla, Domovská obrazovka</div>
 <div class="abs" style="left:9px;top:170.5px;width:9px;height:9px;border:1px solid #e8a8a0;border-radius:3px;opacity:.45"></div>
 <div class="c" style="left:28.5px;top:168.0px;font-size:6.8px;letter-spacing:-.05px;color:#1a1a1a">Pozadí pro Samsung DeX</div>
 <div class="c" style="left:28.5px;top:178.0px;font-size:4.6px;color:#999">Pozadí</div>
 <div class="abs" style="left:9px;top:198.0px;width:9px;height:9px;border:1px solid #e8c070;border-radius:3px;opacity:.45"></div>
 <div class="c" style="left:28.5px;top:195.5px;font-size:6.8px;letter-spacing:-.05px;color:#1a1a1a">Rozšířené funkce</div>
 <div class="c" style="left:28.5px;top:205.5px;font-size:4.6px;color:#999">S Pen, Hry</div>
 <div class="abs" style="left:9px;top:225.5px;width:9px;height:9px;border:1px solid #80c8c8;border-radius:3px;opacity:.45"></div>
 <div class="c" style="left:28.5px;top:223.0px;font-size:6.8px;letter-spacing:-.05px;color:#1a1a1a">Údržba zařízení</div>
 <div class="c" style="left:28.5px;top:233.0px;font-size:4.6px;color:#999">Baterie, Úložiště, Paměť, Zabezpečení zařízení</div>
 <div class="abs" style="left:26px;top:244.0px;width:368px;height:1px;background:#e8e8e8"></div>
 <div class="abs" style="left:9px;top:253.0px;width:9px;height:9px;border:1px solid #90b8e0;border-radius:3px;opacity:.45"></div>
 <div class="c" style="left:28.5px;top:250.5px;font-size:6.8px;letter-spacing:-.05px;color:#1a1a1a">Aplikace</div>
 <div class="c" style="left:28.5px;top:260.5px;font-size:4.6px;color:#999">Výchozí aplikace, Oprávnění aplikací</div>
 <div class="abs" style="left:9px;top:280.5px;width:9px;height:9px;border:1px solid #c8c8c8;border-radius:3px;opacity:.45"></div>
 <div class="c" style="left:28.5px;top:278.0px;font-size:6.6px;font-weight:bold;letter-spacing:-.1px;color:#bbb">Zamknout displej</div>
 <div class="c" style="left:28.5px;top:288.0px;font-size:4.6px;color:#ccc">Typ zámku displeje, Smart Lock</div>
</div>


<!-- Kalendar -->
<div class="aic" style="left:987px;top:140px;background:#3cc0d4"><svg width="38" height="38" viewBox="0 0 38 38"><g fill="none" stroke="#e8fbff" stroke-width="1.5"><path d="M7.5 13 L7.5 28 Q7.5 31.5 11 31.5 L28 31.5 Q31.5 31.5 31.5 28 L31.5 13"/><path d="M7 8.8 L14.6 8.8 L14.6 6.5 M17.9 8.8 L25.4 8.8 L25.4 6.5 M28.6 8.8 L32 8.8"/></g><text x="19.8" y="24.8" text-anchor="middle" font-size="13.5" fill="#e8fbff" font-family="Liberation Sans" transform="translate(19.8 0) scale(.85 1) translate(-19.8 0)">27</text></svg></div>
<div class="ttl" style="left:1045.5px;top:149px;transform:scaleX(.875)">Kalendář</div>
<svg class="x" style="left:1335px;top:146px" viewBox="0 0 28 28"><path d="M1 1L27 27M27 1L1 27" stroke="#fff" stroke-width="2.2"/></svg>
<div class="card" id="kal" style="left:980px;top:190px;background:#fafafa">
 <div class="c" style="left:9.5px;top:5px;font-size:19.5px;line-height:20px;color:#8d8d8d;font-weight:bold;transform-origin:0 0;transform:scaleX(.9)">SRP</div>
 <div class="c" style="left:9.5px;top:26.5px;font-size:6px;color:#aaa">2018</div>
 <div class="c" style="left:38.5px;width:20px;text-align:center;top:45px;font-size:4.5px;color:#666">Po</div>
 <div class="c" style="left:115.5px;width:20px;text-align:center;top:45px;font-size:4.5px;color:#666">Út</div>
 <div class="c" style="left:192.5px;width:20px;text-align:center;top:45px;font-size:4.5px;color:#666">St</div>
 <div class="c" style="left:269.5px;width:20px;text-align:center;top:45px;font-size:4.5px;color:#666">Čt</div>
 <div class="c" style="left:346.5px;width:20px;text-align:center;top:45px;font-size:4.5px;color:#666">Pá</div>
 <div class="abs" style="left:318.5px;top:137px;width:80px;height:17px;border:1px solid #d6eaf0;border-right:none;border-bottom:none"></div>
 <div class="c" style="left:36.5px;width:24px;text-align:center;top:53.5px;font-size:7.5px;color:#bbb">30</div>
 <div class="c" style="left:113.5px;width:24px;text-align:center;top:53.5px;font-size:7.5px;color:#bbb">31</div>
 <div class="abs" style="left:155px;top:50px;width:6px;height:4.5px;border:1px solid #bbb;background:#ddd"></div>
 <div class="c" style="left:190.5px;width:24px;text-align:center;top:53.5px;font-size:7.5px;color:#333">1</div>
 <div class="abs" style="left:232px;top:50px;width:6px;height:4.5px;border:1px solid #bbb;background:#ddd"></div>
 <div class="c" style="left:267.5px;width:24px;text-align:center;top:53.5px;font-size:7.5px;color:#333">2</div>
 <div class="c" style="left:344.5px;width:24px;text-align:center;top:53.5px;font-size:7.5px;color:#333">3</div>
 <div class="abs" style="left:386px;top:50px;width:6px;height:4.5px;border:1px solid #bbb;background:#ddd"></div>
 <div class="c" style="left:10.5px;top:64.5px;width:76px;height:7px;border-left:1px solid #ccc;color:#aaa;font-size:4.3px;line-height:7px;padding-left:3px;overflow:hidden;font-weight:bold">Michal Pavlíček</div>
 <div class="c" style="left:87.5px;top:64.5px;width:76px;height:7px;background:#e4d2e9;color:#9c8aa3;font-size:4.3px;line-height:7px;padding-left:3px;overflow:hidden">První dojmy s gel-tech fit...</div>
 <div class="c" style="left:87.5px;top:72.5px;width:76px;height:7px;background:#e4d2e9;color:#9c8aa3;font-size:4.3px;line-height:7px;padding-left:3px;overflow:hidden">Recenze hry (Kojikila)</div>
 <div class="c" style="left:87.5px;top:80.5px;width:76px;height:7px;border-left:1px solid #ddd;color:#bbb;font-size:4.3px;line-height:7px;padding-left:3px;overflow:hidden;font-weight:bold">Michal Pavlíček</div>
 <div class="c" style="left:164.5px;top:64.5px;width:229px;height:7px;background:#b38d92;color:#fff;font-size:4.3px;line-height:7px;padding-left:3px;overflow:hidden">Útočník nákladů Sbalení</div>
 <div class="c" style="left:164.5px;top:72.5px;width:76px;height:7px;background:#b562cc;color:#fff;font-size:4.3px;line-height:7px;padding-left:3px;overflow:hidden">Android aplikace týdne - výběr</div>
 <div class="c" style="left:164.5px;top:80.5px;width:76px;height:7px;background:#dfb552;color:#fff;font-size:4.3px;line-height:7px;padding-left:3px;overflow:hidden">Recenze a fotky Galaxy od Samsungu</div>
 <div class="c" style="left:241.5px;top:72.5px;width:76px;height:7px;border-left:1px solid #999;color:#222;font-size:4.3px;line-height:7px;padding-left:3px;overflow:hidden;font-weight:bold">Videostativ + rekordéry</div>
 <div class="c" style="left:241.5px;top:80.5px;width:76px;height:7px;border-left:1px solid #999;color:#222;font-size:4.3px;line-height:7px;padding-left:3px;overflow:hidden;font-weight:bold">Blanka</div>
 <div class="c" style="left:318.5px;top:72.5px;width:75px;height:7px;background:#b562cc;color:#fff;font-size:4.3px;line-height:7px;padding-left:3px;overflow:hidden">Freebox (Fluktrl)</div>
 <div class="c" style="left:318.5px;top:80.5px;width:75px;height:7px;border-left:1px solid #555;color:#222;font-size:4.3px;line-height:7px;padding-left:3px;overflow:hidden;font-weight:bold">Michal Pavlíček</div>
 <div class="c" style="left:36.5px;width:24px;text-align:center;top:97.0px;font-size:7.5px;color:#333">6</div>
 <div class="abs" style="left:78px;top:93.5px;width:6px;height:4.5px;border:1px solid #bbb;background:#ddd"></div>
 <div class="c" style="left:113.5px;width:24px;text-align:center;top:97.0px;font-size:7.5px;color:#333">7</div>
 <div class="abs" style="left:155px;top:93.5px;width:6px;height:4.5px;border:1px solid #bbb;background:#ddd"></div>
 <div class="c" style="left:190.5px;width:24px;text-align:center;top:97.0px;font-size:7.5px;color:#333">8</div>
 <div class="abs" style="left:232px;top:93.5px;width:6px;height:4.5px;border:1px solid #bbb;background:#ddd"></div>
 <div class="c" style="left:267.5px;width:24px;text-align:center;top:97.0px;font-size:7.5px;color:#333">9</div>
 <div class="abs" style="left:309px;top:93.5px;width:6px;height:4.5px;border:1px solid #bbb;background:#ddd"></div>
 <div class="c" style="left:344.5px;width:24px;text-align:center;top:97.0px;font-size:7.5px;color:#333">10</div>
 <div class="abs" style="left:386px;top:93.5px;width:6px;height:4.5px;border:1px solid #bbb;background:#ddd"></div>
 <div class="c" style="left:10.5px;top:108.0px;width:76px;height:7px;background:#b38d92;color:#fff;font-size:4.3px;line-height:7px;padding-left:3px;overflow:hidden">Blogové, rekordéry, Sbalení</div>
 <div class="c" style="left:87.5px;top:108.0px;width:76px;height:7px;background:#62bd9b;color:#fff;font-size:4.3px;line-height:7px;padding-left:3px;overflow:hidden">Wireless benchmark - srovnání</div>
 <div class="c" style="left:164.5px;top:108.0px;width:76px;height:7px;background:#b562cc;color:#fff;font-size:4.3px;line-height:7px;padding-left:3px;overflow:hidden">Android aplikace týdne - výběr</div>
 <div class="c" style="left:241.5px;top:108.0px;width:76px;height:7px;background:#dfb552;color:#fff;font-size:4.3px;line-height:7px;padding-left:3px;overflow:hidden">Vlasta o Galaxy Note9</div>
 <div class="c" style="left:318.5px;top:108.0px;width:75px;height:7px;background:#e8923a;color:#fff;font-size:4.3px;line-height:7px;padding-left:3px;overflow:hidden">Info</div>
 <div class="c" style="left:10.5px;top:116.0px;width:383px;height:7px;background:#b38d92;color:#fff;font-size:4.3px;line-height:7px;padding-left:3px;overflow:hidden">Focus, jak to psát, rekordéry - Martin</div>
 <div class="c" style="left:10.5px;top:124.0px;width:383px;height:7px;background:#dfb552;color:#fff;font-size:4.3px;line-height:7px;padding-left:3px;overflow:hidden">Martin - ZM</div>
 <div class="c" style="left:36.5px;width:24px;text-align:center;top:141.0px;font-size:7.5px;color:#333">13</div>
 <div class="c" style="left:113.5px;width:24px;text-align:center;top:141.0px;font-size:7.5px;color:#333">14</div>
 <div class="abs" style="left:155px;top:137.5px;width:6px;height:4.5px;border:1px solid #bbb;background:#ddd"></div>
 <div class="c" style="left:190.5px;width:24px;text-align:center;top:141.0px;font-size:7.5px;color:#333">15</div>
 <div class="c" style="left:267.5px;width:24px;text-align:center;top:141.0px;font-size:7.5px;color:#333">16</div>
 <div class="abs" style="left:351.5px;top:140.5px;width:10px;height:10px;border-radius:50%;background:#2a9fb4;color:#fff;font-size:6.5px;line-height:10px;text-align:center">17</div>
 <div class="c" style="left:10.5px;top:152.0px;width:383px;height:7px;background:#dfb552;color:#fff;font-size:4.3px;line-height:7px;padding-left:3px;overflow:hidden">Petr Vojtěch - dovolená</div>
 <div class="c" style="left:87.5px;top:160.0px;width:76px;height:7px;background:#b562cc;color:#fff;font-size:4.3px;line-height:7px;padding-left:3px;overflow:hidden">Recenze hry (Kojikila)</div>
 <div class="c" style="left:164.5px;top:160.0px;width:76px;height:7px;background:#b562cc;color:#fff;font-size:4.3px;line-height:7px;padding-left:3px;overflow:hidden">Android aplikace týdne - výběr</div>
 <div class="c" style="left:318.5px;top:160.0px;width:75px;height:7px;background:#b562cc;color:#fff;font-size:4.3px;line-height:7px;padding-left:3px;overflow:hidden">Freebox (Fluktrl)</div>
 <div class="c" style="left:87.5px;top:168.0px;width:76px;height:7px;border-left:1px solid #c9a060;color:#222;font-size:4.3px;line-height:7px;padding-left:3px;overflow:hidden;font-weight:bold">Nanašivání</div>
 <div class="c" style="left:164.5px;top:168.0px;width:76px;height:7px;border-left:1px solid #999;color:#222;font-size:4.3px;line-height:7px;padding-left:3px;overflow:hidden;font-weight:bold">nanošivání</div>
 <div class="c" style="left:318.5px;top:168.0px;width:75px;height:7px;border-left:1px solid #c9a060;color:#222;font-size:4.3px;line-height:7px;padding-left:3px;overflow:hidden;font-weight:bold">Blanka</div>
 <div class="c" style="left:36.5px;width:24px;text-align:center;top:184.8px;font-size:7.5px;color:#333">20</div>
 <div class="abs" style="left:78px;top:181.3px;width:6px;height:4.5px;border:1px solid #bbb;background:#ddd"></div>
 <div class="c" style="left:113.5px;width:24px;text-align:center;top:184.8px;font-size:7.5px;color:#333">21</div>
 <div class="abs" style="left:155px;top:181.3px;width:6px;height:4.5px;border:1px solid #bbb;background:#ddd"></div>
 <div class="c" style="left:190.5px;width:24px;text-align:center;top:184.8px;font-size:7.5px;color:#333">22</div>
 <div class="abs" style="left:232px;top:181.3px;width:6px;height:4.5px;border:1px solid #bbb;background:#ddd"></div>
 <div class="c" style="left:267.5px;width:24px;text-align:center;top:184.8px;font-size:7.5px;color:#333">23</div>
 <div class="abs" style="left:309px;top:181.3px;width:6px;height:4.5px;border:1px solid #bbb;background:#ddd"></div>
 <div class="c" style="left:344.5px;width:24px;text-align:center;top:184.8px;font-size:7.5px;color:#333">24</div>
 <div class="abs" style="left:386px;top:181.3px;width:6px;height:4.5px;border:1px solid #bbb;background:#ddd"></div>
 <div class="c" style="left:10.5px;top:195.8px;width:383px;height:7px;background:#e8923a;color:#fff;font-size:4.3px;line-height:7px;padding-left:3px;overflow:hidden">Info</div>
 <div class="c" style="left:10.5px;top:203.8px;width:76px;height:7px;border-left:1px solid #8a5a3a;color:#222;font-size:4.3px;line-height:7px;padding-left:3px;overflow:hidden;font-weight:bold">Ondřej Petr</div>
 <div class="c" style="left:87.5px;top:203.8px;width:230px;height:7px;background:#b38d92;color:#fff;font-size:4.3px;line-height:7px;padding-left:3px;overflow:hidden">Klepák Petr</div>
 <div class="c" style="left:318.5px;top:203.8px;width:75px;height:7px;background:#b562cc;color:#fff;font-size:4.3px;line-height:7px;padding-left:3px;overflow:hidden">Freebox (Fluktrl)</div>
 <div class="c" style="left:87.5px;top:211.8px;width:76px;height:7px;background:#b562cc;color:#fff;font-size:4.3px;line-height:7px;padding-left:3px;overflow:hidden">Postřeh Amélie S Pena, Galaxy Note9</div>
 <div class="c" style="left:164.5px;top:211.8px;width:76px;height:7px;background:#b562cc;color:#fff;font-size:4.3px;line-height:7px;padding-left:3px;overflow:hidden">Android aplikace týdne - výběr</div>
 <div class="c" style="left:241.5px;top:211.8px;width:76px;height:7px;border-left:1px solid #999;color:#222;font-size:4.3px;line-height:7px;padding-left:3px;overflow:hidden;font-weight:bold">mobilenet.cz</div>
 <div class="c" style="left:318.5px;top:211.8px;width:75px;height:7px;border-left:1px solid #999;color:#222;font-size:4.3px;line-height:7px;padding-left:3px;overflow:hidden;font-weight:bold">Recenze Samsung Galaxy Note9 - pro</div>
 <div class="c" style="left:36.5px;width:24px;text-align:center;top:228.5px;font-size:7.5px;color:#333">27</div>
 <div class="abs" style="left:78px;top:225px;width:6px;height:4.5px;border:1px solid #bbb;background:#ddd"></div>
 <div class="c" style="left:113.5px;width:24px;text-align:center;top:228.5px;font-size:7.5px;color:#333">28</div>
 <div class="abs" style="left:155px;top:225px;width:6px;height:4.5px;border:1px solid #bbb;background:#ddd"></div>
 <div class="c" style="left:190.5px;width:24px;text-align:center;top:228.5px;font-size:7.5px;color:#333">29</div>
 <div class="abs" style="left:232px;top:225px;width:6px;height:4.5px;border:1px solid #bbb;background:#ddd"></div>
 <div class="c" style="left:267.5px;width:24px;text-align:center;top:228.5px;font-size:7.5px;color:#333">30</div>
 <div class="abs" style="left:309px;top:225px;width:6px;height:4.5px;border:1px solid #bbb;background:#ddd"></div>
 <div class="c" style="left:344.5px;width:24px;text-align:center;top:228.5px;font-size:7.5px;color:#333">31</div>
 <div class="abs" style="left:386px;top:225px;width:6px;height:4.5px;border:1px solid #bbb;background:#ddd"></div>
 <div class="c" style="left:87.5px;top:239.5px;width:76px;height:7px;background:#b562cc;color:#fff;font-size:4.3px;line-height:7px;padding-left:3px;overflow:hidden">Recenze hry (Kojikila)</div>
 <div class="c" style="left:164.5px;top:239.5px;width:229px;height:7px;background:#e8923a;color:#fff;font-size:4.3px;line-height:7px;padding-left:3px;overflow:hidden">Vita Rudia</div>
 <div class="c" style="left:164.5px;top:247.5px;width:76px;height:7px;background:#b562cc;color:#fff;font-size:4.3px;line-height:7px;padding-left:3px;overflow:hidden">Android aplikace týdne - výběr</div>
 <div class="c" style="left:241.5px;top:247.5px;width:152px;height:7px;background:#dfb552;color:#fff;font-size:4.3px;line-height:7px;padding-left:3px;overflow:hidden">Petr Vojtěch - dovolená</div>
 <div class="c" style="left:164.5px;top:255.5px;width:76px;height:7px;border-left:1px solid #999;color:#222;font-size:4.3px;line-height:7px;padding-left:3px;overflow:hidden;font-weight:bold">Jak funguje DeX se Galaxy Note9</div>
 <div class="c" style="left:241.5px;top:255.5px;width:76px;height:7px;border-left:1px solid #999;color:#222;font-size:4.3px;line-height:7px;padding-left:3px;overflow:hidden;font-weight:bold">HTC Bleskovka</div>
 <div class="c" style="left:318.5px;top:255.5px;width:75px;height:7px;background:#b562cc;color:#fff;font-size:4.3px;line-height:7px;padding-left:3px;overflow:hidden">Freebox (Fluktrl)</div>
 <div class="c" style="left:36.5px;width:24px;text-align:center;top:271.5px;font-size:7.5px;color:#bbb">3</div>
 <div class="c" style="left:113.5px;width:24px;text-align:center;top:271.5px;font-size:7.5px;color:#bbb">4</div>
 <div class="c" style="left:190.5px;width:24px;text-align:center;top:271.5px;font-size:7.5px;color:#bbb">5</div>
 <div class="c" style="left:267.5px;width:24px;text-align:center;top:271.5px;font-size:7.5px;color:#bbb">6</div>
 <div class="c" style="left:344.5px;width:24px;text-align:center;top:271.5px;font-size:7.5px;color:#bbb">7</div>
 <div class="c" style="left:10.5px;top:282.5px;width:383px;height:7px;background:#dfb552;color:#fff;font-size:4.3px;line-height:7px;padding-left:3px;overflow:hidden">Petr Vojtěch - dovolená</div>
 <div class="c" style="left:87.5px;top:290.5px;width:76px;height:7px;background:#efe6f1;color:#c8b8cc;font-size:4.3px;line-height:7px;padding-left:3px;overflow:hidden">Recenze hry (Kojikila)</div>
 <div class="c" style="left:164.5px;top:290.5px;width:76px;height:7px;background:#efe6f1;color:#c8b8cc;font-size:4.3px;line-height:7px;padding-left:3px;overflow:hidden">Android aplikace týdne - výběr</div>
 <div class="c" style="left:241.5px;top:290.5px;width:76px;height:7px;border-left:1px solid #e0e0e0;color:#ccc;font-size:4.3px;line-height:7px;padding-left:3px;overflow:hidden;font-weight:bold">Nanašivání - dovolená</div>
</div>


<!-- PowerPoint -->
<div class="aic" style="left:1422px;top:140px;background:#d9482b">
<svg width="38" height="38" viewBox="0 0 38 38"><rect x="20" y="12" width="12" height="15" fill="#fbeee8"/><rect x="22.5" y="21" width="7" height="1.2" fill="#d9482b"/><rect x="22.5" y="23.5" width="7" height="1.2" fill="#d9482b"/><circle cx="26" cy="16.5" r="2.5" fill="#d9482b"/><path d="M9 10.5 L22 8 L22 31 L9 28.5Z" fill="#fdf3ef"/><text x="11.5" y="23.5" font-size="10" font-weight="bold" fill="#c9402a" font-family="Liberation Sans">P</text></svg></div>
<div class="ttl" style="left:1481px;top:149px">PowerPoint</div>
<svg class="x" style="left:1770px;top:146px" viewBox="0 0 28 28"><path d="M1 1L27 27M27 1L1 27" stroke="#fff" stroke-width="2.2"/></svg>
<div class="card" id="ppt" style="left:1415px;top:190px;background:#fff">
 <div class="abs" style="left:266px;top:39.5px;width:2.3px;height:2.3px;background:#f25022;box-shadow:2.8px 0 0 #7fba00,0 2.8px 0 #00a4ef,2.8px 2.8px 0 #ffb900"></div>
 <div class="c" style="left:272.5px;top:38.5px;font-size:4.8px;color:#777">Microsoft</div>
 <div class="c" style="left:230px;width:100px;text-align:center;top:52.5px;font-size:10.5px;color:#444">Vítá vás <span style="color:#c9441e">Office</span></div>
 <div class="c" style="left:220px;width:120px;text-align:center;top:80px;font-size:6.2px;color:#555">Úkoly můžete plnit na cestách</div>
 <svg class="abs" style="left:236px;top:108px" width="80" height="75" viewBox="0 0 80 75">
  <circle cx="40" cy="40" r="32" fill="none" stroke="#b8b8b8" stroke-width=".8" stroke-dasharray="1.2 1.6"/>
  <g fill="#fff" stroke="#a86a5a" stroke-width=".9"><circle cx="27" cy="14" r="9.5"/><circle cx="69" cy="46" r="9.5"/><circle cx="19.5" cy="60.5" r="9.5"/></g>
  <path d="M23 15 L27 11 L31 15 L31 18.5 L23 18.5Z" fill="none" stroke="#a86a5a" stroke-width=".8"/>
  <path d="M63.5 46 L74.5 46 M68 41.5 L70 46 L68 50.5 M65 44 L65 48" fill="none" stroke="#a86a5a" stroke-width=".9"/>
  <rect x="16.5" y="56" width="6" height="9" fill="none" stroke="#a86a5a" stroke-width=".8"/>
  <rect x="41" y="34" width="10" height="14" fill="#f0d8d0"/><rect x="42.5" y="42" width="7" height="1" fill="#c9402a"/><rect x="42.5" y="44.5" width="7" height="1" fill="#c9402a"/><circle cx="46" cy="37.5" r="2" fill="#c9402a"/>
  <path d="M30 31.5 L42 29.5 L42 50 L30 48Z" fill="#c9402a"/><text x="32" y="44" font-size="9" font-weight="bold" fill="#fff" font-family="Liberation Sans">P</text>
 </svg>
 <div class="c" style="left:214px;width:130px;text-align:center;top:195.5px;font-size:5.8px;color:#333">Přihlásit se nebo se zaregistrovat</div>
 <div class="abs" style="left:218.5px;top:206.8px;width:123px;height:11.5px;border-left:1px solid #ddd;border-bottom:1px solid #999"></div>
 <div class="c" style="left:221px;top:209.5px;font-size:4.6px;color:#999">E-mail, telefon nebo přihlašovací jméno</div>
 <div class="abs" style="left:329.7px;top:206.8px;width:11.5px;height:11.5px;background:#c9441e;color:#fff;font-size:7px;line-height:11px;text-align:center">→</div>
 <div class="c" style="left:230px;width:100px;text-align:center;top:246px;font-size:7.5px;color:#a95038">Přihlásit se později</div>
 <div class="c" style="left:200px;width:160px;text-align:center;top:260px;font-size:4.2px;color:#444">Používáním této aplikace vyjadřujete svůj souhlas s <u>podmínkami použití</u></div>
</div>

<!-- Telefon -->
<div class="aic" style="left:117px;top:578px;background:#21c76d">
<svg width="38" height="38" viewBox="0 0 38 38"><path d="M13 8.5 L10.5 10.5 C8 13 9.5 18.5 15 24 C20.5 29.5 26 31 28.5 28.5 L30.5 26 L26.5 22.5 L24 24.5 C22 24 15 17 14.5 15 L16.5 12.5Z" fill="none" stroke="#e4ffee" stroke-width="1.6" stroke-linejoin="round"/></svg></div>
<div class="ttl" style="left:176px;top:587.5px;transform:scaleX(.935)">Telefon</div>
<svg class="x" style="left:465px;top:584px" viewBox="0 0 28 28"><path d="M1 1L27 27M27 1L1 27" stroke="#fff" stroke-width="2.2"/></svg>
<div class="card" id="tel" style="left:110px;top:628px;background:#fafafa">
 <div class="abs" style="left:10px;top:3.6px;width:372.3px;height:24px;border-radius:12px;background:#f0f0f0;box-shadow:0 .5px 1.5px rgba(0,0,0,.12)"></div>
 <svg class="abs" style="left:16px;top:10.5px" width="11" height="11" viewBox="0 0 11 11"><circle cx="4.5" cy="4.5" r="3.5" fill="none" stroke="#999" stroke-width=".9"/><path d="M7 7L10 10" stroke="#999" stroke-width="1"/></svg>
 <div class="c" style="left:29px;top:10.5px;font-size:8px;color:#9a9a9a">Hledat</div>
 <svg class="abs" style="left:344.5px;top:9px" width="10" height="13" viewBox="0 0 10 13"><rect x="3.2" y=".5" width="3.6" height="7" rx="1.8" fill="#666"/><path d="M1.5 5.5 Q1.5 9.5 5 9.5 Q8.5 9.5 8.5 5.5 M5 9.5 L5 12" fill="none" stroke="#666" stroke-width=".9"/></svg>
 <div class="abs" style="left:361px;top:12px;width:.8px;height:8px;background:#ccc"></div>
 <div class="abs" style="left:371.3px;top:11px;width:1.6px;height:1.6px;background:#555;box-shadow:0 3px 0 #555,0 6px 0 #555"></div>
 <div class="c" style="left:41.5px;width:60px;text-align:center;top:41px;font-size:6.5px;color:#6aa85a;font-weight:bold;transform:scaleX(.9)">POSLEDNÍ</div>
 <div class="c" style="left:166px;width:60px;text-align:center;top:41px;font-size:6.5px;color:#888;transform:scaleX(.9)">KONTAKTY</div>
 <div class="c" style="left:290.8px;width:60px;text-align:center;top:41px;font-size:6.5px;color:#888;transform:scaleX(.9)">MÍSTA</div>
 <div class="abs" style="left:10px;top:56.8px;width:124px;height:1.6px;background:#8cbf7c"></div>
 <div class="abs" style="left:134px;top:57.6px;width:248px;height:.8px;background:#ececec"></div>
 <div class="abs" style="left:171.3px;top:58px;width:.8px;height:237px;background:#dedede"></div>
 <div class="abs" style="left:151.3px;top:64.9px;width:236px;height:54.5px;border:1px solid #c2d9b8;border-radius:7px;background:#fafafa"></div>
 <div class="abs" style="left:313px;top:61.5px;width:6px;height:6px;border-top:1px solid #c2d9b8;border-left:1px solid #c2d9b8;background:#fafafa;transform:rotate(45deg)"></div>
 <div class="c" style="left:161.4px;top:74.5px;font-size:8.2px;line-height:10px;color:#2a2a2a;letter-spacing:-.05px">Objevujte nová místa v blízkém okolí a potom je rychle<br>kontaktujte.</div>
 <div class="c" style="left:340px;width:37.3px;text-align:right;top:101px;font-size:6.5px;color:#6aa85a;font-weight:bold">START</div>
 <svg class="abs" style="left:72px;top:262px" width="26" height="26" viewBox="0 0 26 26"><path d="M6 2.5 L3.5 4.5 C1.5 7 3 12 8 17.5 C13.5 23 18.5 24.5 21 22 L23 19.5 L19.5 16.5 L17 18 C15 17.5 8.5 11 8 9 L10 6.5Z" fill="none" stroke="#bdbdbd" stroke-width="1" stroke-linejoin="round"/></svg>
 <div class="c" style="left:30px;width:110px;text-align:center;top:289px;font-size:7.5px;color:#bbb">Žádné poslední hovory nebo</div>
</div>

<!-- Udrzba -->
<div class="aic" style="left:552px;top:578px;background:#28bfd6">
<svg width="38" height="38" viewBox="0 0 38 38"><g fill="none" stroke="#e6fbff" stroke-width="1.8"><path d="M19 7 A12 12 0 1 1 7.8 14.8"/><path d="M9.6 11.6 A12 12 0 0 1 16.5 7.3"/><path d="M23.5 15.5 A5.6 5.6 0 1 1 15.8 14.2"/><path d="M15 11.2 L16.2 14.4 L13 15.3"/></g></svg></div>
<div class="ttl" style="left:609.5px;top:587.5px;transform:scaleX(.87)">Údržba zařízení</div>
<svg class="x" style="left:900px;top:584px" viewBox="0 0 28 28"><path d="M1 1L27 27M27 1L1 27" stroke="#fff" stroke-width="2.2"/></svg>
<div class="card" id="udr" style="left:545px;top:628px;background:#f9f9f9">
 <svg class="abs" style="left:11px;top:11px" width="8" height="10" viewBox="0 0 8 10"><path d="M6 1L2 5L6 9" fill="none" stroke="#5aa8b8" stroke-width="1.1"/></svg>
 <div class="c" style="left:30.5px;top:11.5px;font-size:8px;color:#333;font-weight:bold;transform-origin:0 0;transform:scaleX(.93)">ÚDRŽBA ZAŘÍZENÍ</div>
 <svg class="abs" style="left:350px;top:10px" width="9" height="11" viewBox="0 0 9 11"><path d="M1 .5 L5.5 .5 L8.5 3.5 L8.5 10.5 L1 10.5Z" fill="none" stroke="#5aa8b8" stroke-width=".8"/><path d="M2.5 5.5H7M2.5 7.2H7M2.5 8.9H7" stroke="#5aa8b8" stroke-width=".6"/></svg>
 <div class="abs" style="left:375px;top:12.5px;width:1.6px;height:1.6px;border-radius:50%;background:#555;box-shadow:0 2.8px 0 #555,0 5.6px 0 #555"></div>
 <svg class="abs" style="left:98px;top:61px" width="198" height="198" viewBox="0 0 198 198"><circle cx="99" cy="99" r="96" fill="none" stroke="#7fbfcf" stroke-width="1.3"/><path d="M99 3 A96 96 0 0 0 45 20" fill="none" stroke="#e8e8e8" stroke-width="1.6"/></svg>
 <div class="c" style="left:166.5px;top:133px;font-size:39px;line-height:44px;color:#7db7cf;transform-origin:0 0;transform:scaleX(.8)">91</div>
 <div class="c" style="left:206px;top:148.5px;font-size:9.3px;color:#777">/100</div>
 <div class="c" style="left:146.4px;width:100px;text-align:center;top:181px;font-size:10.2px;color:#7db7cf">VYNIKAJÍCÍ!</div>
</div>

<!-- 3DMark -->
<div class="aic" style="left:987px;top:578px;background:#e4e4ea">
<svg width="38" height="38" viewBox="0 0 38 38"><circle cx="19" cy="19" r="13.5" fill="#fbfbfb"/><path d="M12 10 L26 21.5 L20 19.5Z" fill="#e6a12e"/><path d="M9 21 L26 22 L17 24Z" fill="#d9882a"/><path d="M15 27 L26 22.5 L21 26Z" fill="#e6a12e"/></svg></div>
<div class="ttl" style="left:1046px;top:587.5px">3DMark</div>
<svg class="x" style="left:1335px;top:584px" viewBox="0 0 28 28"><path d="M1 1L27 27M27 1L1 27" stroke="#fff" stroke-width="2.2"/></svg>
<div class="card" id="tdm" style="left:980px;top:628px;background:#f4f4f4">
 <svg class="abs" style="left:0;top:0" width="394" height="70" viewBox="0 0 394 70"><rect width="394" height="70" fill="#ededed"/><g filter="url(#tb)"><polygon points="87,14 90,6 156,-7 90,-0 102,5" fill="rgb(227,227,227)" opacity=".7"/><polygon points="339,4 294,4 293,-10" fill="rgb(248,248,248)" opacity=".7"/><polygon points="345,17 347,21 310,17" fill="rgb(233,233,233)" opacity=".7"/><polygon points="148,41 142,38 165,35" fill="rgb(244,244,244)" opacity=".7"/><polygon points="154,2 144,12 168,19" fill="rgb(237,237,237)" opacity=".7"/><polygon points="233,5 212,-4 203,2 261,-1 270,-10" fill="rgb(254,254,254)" opacity=".7"/><polygon points="99,18 115,39 99,41 118,35" fill="rgb(253,253,253)" opacity=".7"/><polygon points="358,9 362,9 336,14 304,7" fill="rgb(235,235,235)" opacity=".7"/><polygon points="120,66 157,82 179,81 135,65" fill="rgb(239,239,239)" opacity=".7"/><polygon points="242,11 248,13 269,26" fill="rgb(235,235,235)" opacity=".7"/><polygon points="95,5 142,9 107,7 120,-14 138,12" fill="rgb(253,253,253)" opacity=".7"/><polygon points="309,23 309,12 356,21 286,27" fill="rgb(229,229,229)" opacity=".7"/><polygon points="26,7 -44,-8 -20,8" fill="rgb(239,239,239)" opacity=".7"/><polygon points="265,48 234,30 204,16" fill="rgb(239,239,239)" opacity=".7"/><polygon points="266,14 330,32 265,32 256,32 332,44" fill="rgb(254,254,254)" opacity=".7"/><polygon points="325,24 340,34 348,38" fill="rgb(233,233,233)" opacity=".7"/><polygon points="345,49 320,68 360,70 318,49 329,54" fill="rgb(239,239,239)" opacity=".7"/><polygon points="350,20 369,20 420,25" fill="rgb(225,225,225)" opacity=".7"/><polygon points="153,51 219,56 207,45 161,56 173,56" fill="rgb(241,241,241)" opacity=".7"/><polygon points="198,41 150,41 212,64" fill="rgb(231,231,231)" opacity=".7"/><polygon points="253,35 245,27 202,58 253,42" fill="rgb(230,230,230)" opacity=".7"/><polygon points="130,54 168,74 154,66" fill="rgb(230,230,230)" opacity=".7"/><polygon points="28,64 16,65 45,40 -13,53" fill="rgb(243,243,243)" opacity=".7"/><polygon points="282,41 326,44 294,42" fill="rgb(248,248,248)" opacity=".7"/><polygon points="152,45 151,42 184,39 219,40 174,73" fill="rgb(250,250,250)" opacity=".7"/><polygon points="201,60 201,40 202,62 234,64" fill="rgb(233,233,233)" opacity=".7"/><polygon points="326,-5 348,-1 311,-5" fill="rgb(229,229,229)" opacity=".7"/><polygon points="369,-2 338,-10 355,12 325,17 331,9" fill="rgb(234,234,234)" opacity=".7"/><polygon points="49,24 45,12 45,21 53,34 47,27" fill="rgb(237,237,237)" opacity=".7"/><polygon points="238,-19 181,-21 222,-13" fill="rgb(230,230,230)" opacity=".7"/><polygon points="352,54 298,77 332,69 293,46 341,60" fill="rgb(227,227,227)" opacity=".7"/><polygon points="124,-24 129,-24 129,-10" fill="rgb(239,239,239)" opacity=".7"/><polygon points="407,9 414,41 435,17 372,41" fill="rgb(251,251,251)" opacity=".7"/><polygon points="111,61 97,65 155,38 77,55" fill="rgb(233,233,233)" opacity=".7"/><polygon points="169,22 195,11 228,7 201,18" fill="rgb(234,234,234)" opacity=".7"/><polygon points="149,48 170,78 157,43 141,74 125,45" fill="rgb(253,253,253)" opacity=".7"/><polygon points="373,68 350,48 310,56 295,59 321,81" fill="rgb(238,238,238)" opacity=".7"/><polygon points="68,61 77,57 73,78 70,82" fill="rgb(228,228,228)" opacity=".7"/></g><defs><filter id="tb"><feGaussianBlur stdDeviation="1.2"/></filter></defs></svg>
 <svg class="abs" style="left:15px;top:13px" width="11" height="11" viewBox="0 0 11 11"><path d="M10 5.5H1.5M5.5 1.5L1.5 5.5L5.5 9.5" fill="none" stroke="#222" stroke-width="1.1"/></svg>
 <div class="c" style="left:37.3px;top:27px;font-size:13px;color:#222">Benchmark results</div>
 <div class="abs" style="left:9.2px;top:68.2px;width:375.7px;height:144.4px;background:#fff;box-shadow:0 1px 2px rgba(0,0,0,.2)"></div>
 <div class="c" style="left:18px;top:83px;font-size:13px;color:#333;transform-origin:0 0;transform:scaleX(.97)">Sling Shot Extreme - OpenGL ES 3.1</div>
 <div class="c" style="left:18px;top:120px;font-size:8.6px;color:#444">Overall score</div>
 <div class="c" style="left:296px;width:80px;text-align:right;top:109.5px;font-size:19px;color:#e08c2e;letter-spacing:-.3px">3 420</div>
 <div class="c" style="left:18px;top:143.5px;font-size:8.6px;color:#444">Graphics score</div>
 <div class="c" style="left:316px;width:60px;text-align:right;top:143px;font-size:8.7px;color:#333">3 662</div>
 <div class="c" style="left:18px;top:164.5px;font-size:8.6px;color:#444">Physics score</div>
 <div class="c" style="left:316px;width:60px;text-align:right;top:164px;font-size:8.7px;color:#333">2 777</div>
 <div class="c" style="left:18px;top:194px;font-size:7px;color:#333;font-weight:bold">VIEW DETAILS</div>
 <svg class="abs" style="left:361.5px;top:192.5px" width="11" height="11" viewBox="0 0 11 11"><circle cx="8.5" cy="2.2" r="1.7" fill="#222"/><circle cx="2.2" cy="5.5" r="1.7" fill="#222"/><circle cx="8.5" cy="8.8" r="1.7" fill="#222"/><path d="M8.5 2.2L2.2 5.5L8.5 8.8" fill="none" stroke="#222" stroke-width=".9"/></svg>
 <div class="abs" style="left:9.2px;top:220.2px;width:375.7px;height:80px;background:#fff;box-shadow:0 1px 2px rgba(0,0,0,.2)"></div>
 <div class="c" style="left:18px;top:236px;font-size:13px;color:#333;transform-origin:0 0;transform:scaleX(.97)">Sling Shot Extreme - Vulkan</div>
 <div class="c" style="left:18px;top:273.5px;font-size:8.6px;color:#444">Overall score</div>
 <div class="c" style="left:296px;width:80px;text-align:right;top:263px;font-size:19px;color:#e08c2e;letter-spacing:-.3px">2 767</div>
</div>

<!-- Play -->
<div class="aic" style="left:1422px;top:578px;background:#fbfbfb">
<svg width="38" height="38" viewBox="0 0 38 38"><path d="M12 9 L12 29 L22 19Z" fill="#2bb6e8"/><path d="M12 9 L22 19 L25.5 15.5 L13.5 8.5Z" fill="#34c47a"/><path d="M12 29 L22 19 L25.5 22.5 L13.5 29.5Z" fill="#e8433f"/><path d="M22 19 L25.5 15.5 L30 18 Q31 19 30 20 L25.5 22.5Z" fill="#fbc02d"/></svg></div>
<div class="ttl" style="left:1481px;top:587.5px;transform:scaleX(.877)">Výsledky vyhledávání pro dota..</div>
<svg class="x" style="left:1770px;top:584px" viewBox="0 0 28 28"><path d="M1 1L27 27M27 1L1 27" stroke="#fff" stroke-width="2.2"/></svg>
<div class="card" id="play" style="left:1415px;top:628px;background:#ebebeb">
 <div class="abs" style="left:0;top:0;width:394px;height:35.3px;background:#1f9e56"></div>
 <svg class="abs" style="left:9.5px;top:13px" width="11" height="11" viewBox="0 0 11 11"><path d="M10 5.5H1.5M5.5 1.5L1.5 5.5L5.5 9.5" fill="none" stroke="#fff" stroke-width="1.2"/></svg>
 <div class="c" style="left:31.5px;top:11.5px;font-size:11px;color:#fff;letter-spacing:-.1px">Google Play Store</div>
 <svg class="abs" style="left:352px;top:13px" width="11" height="11" viewBox="0 0 11 11"><circle cx="4.3" cy="4.3" r="3" fill="none" stroke="#fff" stroke-width="1.2"/><path d="M6.5 6.5L10 10" stroke="#fff" stroke-width="1.4"/></svg>
 <div class="abs" style="left:380px;top:14px;width:1.8px;height:1.8px;background:#fff;box-shadow:0 2.8px 0 #fff,0 5.6px 0 #fff"></div>
 <div class="abs" style="left:13.7px;top:35.3px;width:366.6px;height:179px;background:linear-gradient(100deg,#ee5a2c 0%,#ea4a2e 50%,#e5342d 100%)"></div>
 <div class="abs" style="left:56.8px;top:82.6px;width:75.5px;height:75.5px;border-radius:11px;background:#fff"></div>
 <svg class="abs" style="left:59.5px;top:83.9px" width="70.0" height="72.8" viewBox="-50 -58 100 104"><circle cx="0" cy="0" r="40" fill="#d8322e"/><path d="M-38 -8 C-42 -26 -32 -36 -30 -48 C-22 -38 -16 -34 -11 -36 C-9 -46 -3 -52 2 -58 C6 -46 14 -42 17 -38 C21 -43 28 -46 34 -50 C32 -38 42 -26 38 -8Z" fill="#d8322e"/><path d="M-26 -6 C-30 -20 -22 -26 -20 -34 C-14 -26 -8 -24 -4 -26 C-2 -34 2 -38 6 -44 C8 -34 14 -30 16 -26 C20 -31 24 -33 28 -35 C26 -24 32 -16 28 -6Z" fill="#ec6656" opacity=".55"/><path d="M-37 18 C-32 -10 32 -10 37 18 A40 40 0 0 1 -37 18Z" fill="#7e1719"/><path d="M-12 -20 L-9 2 M12 -20 L9 2" stroke="#7e1719" stroke-width="9" stroke-linecap="round"/><path d="M-22 10 L-8 15 L-16 19Z M22 10 L8 15 L16 19Z" fill="#fff"/></svg>
 <div class="c" style="left:153px;top:80px;font-size:34px;line-height:38px;color:#fff;letter-spacing:-.4px;transform-origin:0 0;transform:scaleX(1.02)">benchmark</div>
 <div class="c" style="left:152px;top:113px;font-size:44px;line-height:48px;color:#fff;font-weight:bold;letter-spacing:-.5px">ANTUTU</div>
 <div class="c" style="left:57px;top:165px;font-size:20.5px;line-height:24px;color:#fcd9cd;letter-spacing:-.3px">Learn more about your device</div>
 <div class="abs" style="left:13.7px;top:214.4px;width:366.6px;height:81px;background:#fff"></div>
 <svg class="abs" style="left:33.8px;top:233.9px" width="72.5" height="75.4" viewBox="-50 -58 100 104"><circle cx="0" cy="0" r="40" fill="#d8322e"/><path d="M-38 -8 C-42 -26 -32 -36 -30 -48 C-22 -38 -16 -34 -11 -36 C-9 -46 -3 -52 2 -58 C6 -46 14 -42 17 -38 C21 -43 28 -46 34 -50 C32 -38 42 -26 38 -8Z" fill="#d8322e"/><path d="M-26 -6 C-30 -20 -22 -26 -20 -34 C-14 -26 -8 -24 -4 -26 C-2 -34 2 -38 6 -44 C8 -34 14 -30 16 -26 C20 -31 24 -33 28 -35 C26 -24 32 -16 28 -6Z" fill="#ec6656" opacity=".55"/><path d="M-37 18 C-32 -10 32 -10 37 18 A40 40 0 0 1 -37 18Z" fill="#7e1719"/><path d="M-12 -20 L-9 2 M12 -20 L9 2" stroke="#7e1719" stroke-width="9" stroke-linecap="round"/><path d="M-22 10 L-8 15 L-16 19Z M22 10 L8 15 L16 19Z" fill="#fff"/></svg>
 <div class="c" style="left:129px;top:230.5px;font-size:14.5px;color:#222;letter-spacing:.2px">Antutu 3DBench</div>
 <div class="c" style="left:129px;top:251px;font-size:8.2px;color:#888">AnTuTu</div>
 <div class="abs" style="left:129px;top:265px;width:5px;height:7px;background:#3a8d2c"></div>
 <div class="c" style="left:137px;top:264.5px;font-size:7.5px;color:#555">PEGI 3</div>
</div>

<div id="cards"></div>

<!-- bottom arrows -->
<svg class="abs" style="left:900px;top:1035px" width="120" height="28" viewBox="0 0 120 28"><path d="M5.5 20 L18.5 6 L31.5 20" fill="none" stroke="#3c3e6e" stroke-width="2.8"/><path d="M87.5 6 L100.5 20 L113.5 6" fill="none" stroke="#fff" stroke-width="3"/></svg>

<!-- taskbar -->
<div class="abs" style="left:33px;top:1137px;width:234px;height:53px;border-radius:9px;background:#01021a"></div>
<div class="abs" style="left:1342px;top:1137px;width:545px;height:54px;border-radius:9px;background:#01021a"></div>


<!-- nav icons -->
<svg class="abs" style="left:33px;top:1137px" width="234" height="53" viewBox="0 0 234 53">
 <g fill="#fff">
  <circle cx="20.8" cy="17.8" r="2"/><circle cx="30.2" cy="17.8" r="2"/><circle cx="39.6" cy="17.8" r="2"/>
  <circle cx="20.8" cy="27" r="2"/><circle cx="30.2" cy="27" r="2"/><circle cx="39.6" cy="27" r="2"/>
  <circle cx="20.8" cy="36.3" r="2"/><circle cx="30.2" cy="36.3" r="2"/><circle cx="39.6" cy="36.3" r="2"/>
 </g>
 <g fill="none" stroke="#fff" stroke-width="2.1">
  <path d="M77.8 25.2 L95 25.2 Q98.7 25.2 98.7 21.5 L98.7 16.3"/>
  <path d="M77.8 38.4 L77.8 33.5 Q77.8 29.8 81.5 29.8 L98.2 29.8"/>
  <path d="M134.9 38.4 L134.9 19.5 Q134.9 15.9 138.5 15.9 L157 15.9"/>
  <path d="M156 21.7 L156 34 Q156 37.4 152.6 37.4 L140.3 37.4"/>
  <path d="M213.7 25.9 L194.5 25.9 L203.7 16.3 M196.8 31.3 L203.7 38.2"/>
 </g>
</svg>
<!-- dock apps -->
<div class="abs" style="left:306px;top:1135.5px;width:14px;height:5px;border-radius:2.5px;background:#fff"></div>
<div class="abs" style="left:374.5px;top:1135.5px;width:14px;height:5px;border-radius:2.5px;background:#fff"></div>
<div class="abs" style="left:443px;top:1135.5px;width:14px;height:5px;border-radius:2.5px;background:#fff"></div>
<div class="abs" style="left:511px;top:1135.5px;width:14px;height:5px;border-radius:2.5px;background:#fff"></div>
<div class="abs" style="left:579px;top:1135.5px;width:14px;height:5px;border-radius:2.5px;background:#fff"></div>
<div class="abs" style="left:647px;top:1135.5px;width:14px;height:5px;border-radius:2.5px;background:#fff"></div>
<div class="abs" style="left:716px;top:1135.5px;width:14px;height:5px;border-radius:2.5px;background:#fff"></div>
<div class="abs" style="left:290px;top:1143px;width:46px;height:46px;border-radius:17px;overflow:hidden;background:#fbfbfb"><svg width="46" height="46" viewBox="0 0 46 46"><rect x="6" y="11" width="34" height="24" rx="6" fill="#e52521"/><path d="M20 17 L29 23 L20 29Z" fill="#fff"/></svg></div>
<div class="abs" style="left:358.5px;top:1143px;width:46px;height:46px;border-radius:17px;overflow:hidden;background:linear-gradient(135deg,#5fd6c4,#4d8ff0)"><svg width="46" height="46" viewBox="0 0 46 46"><path d="M11 13 L36 13 L36 29 L20 29 L13 34.5 L13 29 L11 29Z" fill="none" stroke="#eaffff" stroke-width="1.7" stroke-linejoin="round"/></svg></div>
<div class="abs" style="left:427px;top:1143px;width:46px;height:46px;border-radius:17px;overflow:hidden;background:#fbfbfb"><svg width="46" height="46" viewBox="0 0 46 46"><circle cx="23" cy="24" r="20" fill="#d9342f"/><path d="M5 18 C8 10 12 6 14 1 C16 6 17 8 18 10 C20 4 23 1 25 0 C26 5 28 8 29 10 C31 6 34 4 37 2 C37 8 40 13 41 18Z" fill="#d9342f"/><path d="M8 40 C10 26 36 26 38 40 A20 20 0 0 1 8 40Z" fill="#7a1518"/><path d="M17 18 L19 30 M29 18 L27 30" stroke="#7a1518" stroke-width="4" stroke-linecap="round"/><path d="M15 34 L20 36 L17 37.5Z M31 34 L26 36 L29 37.5Z" fill="#fff"/></svg></div>
<div class="abs" style="left:495px;top:1143px;width:46px;height:46px;border-radius:17px;overflow:hidden;background:#fbfbfb"><svg width="46" height="46" viewBox="0 0 46 46"><path d="M15 11 L15 35 L27 23Z" fill="#2bb6e8"/><path d="M15 11 L27 23 L31 19 L16.5 10.5Z" fill="#34c47a"/><path d="M15 35 L27 23 L31 27 L16.5 35.5Z" fill="#e8433f"/><path d="M27 23 L31 19 L36.5 22 Q37.5 23 36.5 24 L31 27Z" fill="#fbc02d"/></svg></div>
<div class="abs" style="left:563px;top:1143px;width:46px;height:46px;border-radius:17px;overflow:hidden;background:#e4e4ea"><svg width="46" height="46" viewBox="0 0 46 46"><circle cx="23" cy="23" r="16" fill="#fbfbfb"/><path d="M15 11 L32 25.5 L24.5 23Z" fill="#e6a12e"/><path d="M11.5 24.5 L32 26 L21 28.5Z" fill="#d9882a"/><path d="M18.5 33 L32 27 L25.5 31.5Z" fill="#e6a12e"/></svg></div>
<div class="abs" style="left:631px;top:1143px;width:46px;height:46px;border-radius:17px;overflow:hidden;background:#28bfd6"><svg width="46" height="46" viewBox="0 0 46 46"><g fill="none" stroke="#e6fbff" stroke-width="1.7"><path d="M23 10 A13 13 0 1 1 11 18"/><path d="M13 15 A13 13 0 0 1 20.5 10.3"/><path d="M27.5 18.5 A6.2 6.2 0 1 1 19.5 17.5"/><path d="M18.5 14.5 L19.8 17.6 L16.5 18.5"/></g></svg></div>
<div class="abs" style="left:700px;top:1143px;width:46px;height:46px;border-radius:17px;overflow:hidden;background:#21c76d"><svg width="46" height="46" viewBox="0 0 46 46"><path d="M16 10 L13 12.5 C10 15.5 11.5 22 18 28.5 C24.5 35 31 36.5 34 33.5 L36.5 30.5 L32 26.5 L29 28.5 C26.5 28 18.5 20 18 17.5 L20.5 14.5Z" fill="none" stroke="#e4ffee" stroke-width="1.8" stroke-linejoin="round"/></svg></div>
<!-- tray icons -->
<svg class="abs" style="left:1342px;top:1137px" width="545" height="54" viewBox="0 0 545 54">
 <g fill="none" stroke="#fff" stroke-width="1.8">
  <path d="M42.5 16.5 L31.5 27.5 L42.5 38.5"/>
  <rect x="79" y="20" width="16" height="15" rx="1.5" stroke-width="1.6"/>
 </g>
 <path d="M81.5 32.5 L86 26.5 L89 30 L91 28 L93 32.5Z" fill="#fff"/><circle cx="84" cy="23.5" r="1.5" fill="#fff"/>
 <g fill="#fff"><circle cx="128" cy="26.5" r="1.7"/><circle cx="134" cy="26.5" r="1.7"/><circle cx="140" cy="26.5" r="1.7"/></g>
 <rect x="166.5" y="16" width="1.5" height="23" fill="#777"/>
 <g fill="none" stroke="#fff" stroke-width="1.9" stroke-linecap="round">
  <path d="M185 22 A15 15 0 0 1 208 22"/><path d="M188.5 26 A10 10 0 0 1 204.5 26"/><path d="M192 30 A5 5 0 0 1 201 30"/>
 </g>
 <circle cx="196.5" cy="34" r="2" fill="#fff"/>
 <path d="M204 30.5 L204 38 M202 36 L204 38.5 L206 36 M210 38.5 L210 31 M208 33 L210 30.5 L212 33" fill="none" stroke="#bbb" stroke-width="1.2"/>
 <g fill="#fff"><path d="M235 38 L240 33 L240 38Z"/><rect x="243" y="28" width="2.2" height="10"/><rect x="248" y="22" width="2.2" height="16" opacity=".55"/><rect x="253" y="16" width="2.2" height="22" opacity=".55"/></g>
 <rect x="279" y="17.5" width="16" height="20" rx="1.5" fill="#fff"/><rect x="283" y="15.5" width="8" height="3" fill="#fff"/><rect x="281" y="20" width="12" height="6" fill="#9a9a9a"/>
 <path d="M319.5 31.5 L326.5 24 L333.5 31.5Z" fill="#fff"/>
 <rect x="358.5" y="16" width="1.5" height="23" fill="#777"/>
 <path d="M381 22 L386 22 L393 16 L393 39 L386 33 L381 33Z" fill="#fff"/>
 <g fill="none" stroke="#fff" stroke-width="1.8"><path d="M397.5 22 Q400.5 27.5 397.5 33"/><path d="M402 18 Q407.5 27.5 402 37"/></g>
 <g fill="none" stroke="#fff" stroke-width="2"><circle cx="445" cy="25" r="8.5"/><path d="M451.5 31.5 L458.5 38.5"/></g>
 <text x="475" y="36" font-size="24" fill="#fff" font-family="Liberation Sans" transform="translate(476 0) scale(.88 1) translate(-476 0)">14:24</text>
</svg>

</body></html>
